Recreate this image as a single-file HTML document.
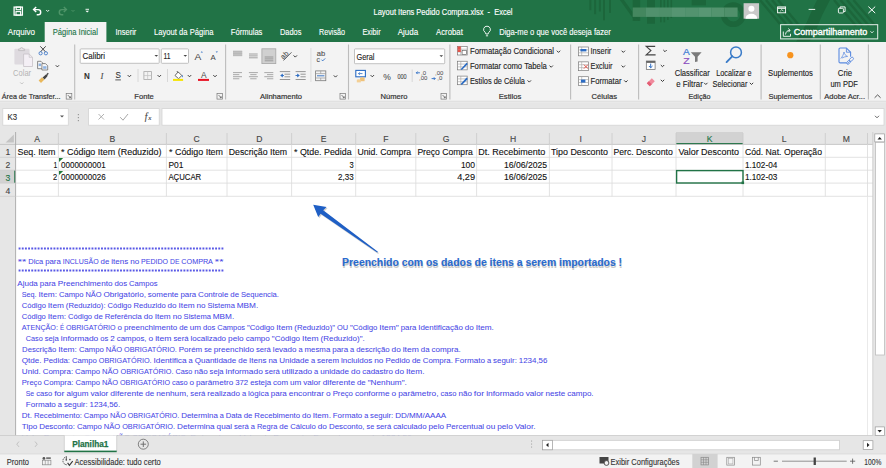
<!DOCTYPE html>
<html><head><meta charset="utf-8"><style>
html,body{margin:0;padding:0;width:886px;height:468px;overflow:hidden;background:#fff}
svg{display:block}
text{font-family:"Liberation Sans",sans-serif;white-space:pre}
.m{font-family:"Liberation Mono",monospace}
</style></head><body>
<svg width="886" height="468" viewBox="0 0 886 468">
<rect x="0" y="0" width="886" height="42" fill="#217346" />
<clipPath id="tb"><rect x="0" y="0" width="886" height="41.5"/></clipPath>
<g clip-path="url(#tb)">
<rect x="589.4" y="0" width="2" height="10.2" fill="#1c663b" />
<rect x="594.1" y="0" width="2" height="14.2" fill="#1c663b" />
<rect x="598.9" y="0" width="2" height="11.5" fill="#1c663b" />
<rect x="603" y="0" width="2" height="20.3" fill="#1c663b" />
<rect x="609" y="0" width="2" height="12.9" fill="#1c663b" />
<rect x="632.7" y="0" width="7.5" height="21" fill="#1c663b" />
<rect x="647" y="0" width="8" height="23.7" fill="#1c663b" />
<rect x="660" y="0" width="1.6" height="22.3" fill="#1c663b" />
<rect x="663.5" y="0" width="1.6" height="22.3" fill="#1c663b" />
<rect x="667" y="0" width="1.6" height="20" fill="#1c663b" />
<rect x="670.5" y="0" width="1.6" height="18" fill="#1c663b" />
<path d="M619.9 0h4l15 21h-4z" fill="#1c663b" />
<rect x="691.7" y="0" width="14.3" height="5.4" fill="#1c663b" />
<circle cx="733.3" cy="14.7" r="9.6" fill="none" stroke="#1c663b" stroke-width="5.6"/>
<path d="M817 0H830Q822 14 816 30Q812 38 809 42H796Q801 34 806 24Q811 12 817 0Z" fill="#1c663b" />
<path d="M760 0l20 24" fill="none" stroke="#1c663b" stroke-width="2.4" />
<path d="M766 0l20 24" fill="none" stroke="#1c663b" stroke-width="2.4" />
<path d="M772 0l20 24" fill="none" stroke="#1c663b" stroke-width="2.4" />
<path d="M778 0l20 24" fill="none" stroke="#1c663b" stroke-width="2.4" />
<path d="M834.0 0l22 26" fill="none" stroke="#1c663b" stroke-width="2.4" />
<path d="M840.5 0l22 26" fill="none" stroke="#1c663b" stroke-width="2.4" />
<path d="M847.0 0l22 26" fill="none" stroke="#1c663b" stroke-width="2.4" />
<path d="M853.5 0l22 26" fill="none" stroke="#1c663b" stroke-width="2.4" />
</g>
<rect x="14.1" y="7.1" width="8.3" height="8" fill="none" stroke="#ffffff" stroke-width="1.3" />
<rect x="16.2" y="7.1" width="4.3" height="2.6" fill="none" stroke="#ffffff" stroke-width="1.1" />
<rect x="16.0" y="11.6" width="4.6" height="3.5" fill="none" stroke="#ffffff" stroke-width="1.1" />
<path d="M33.8 9.6h4.3a2.6 2.6 0 0 1 0 5.2h-1.4" fill="none" stroke="#ffffff" stroke-width="1.45" />
<path d="M36.2 7.1l-2.6 2.5 2.6 2.5" fill="none" stroke="#ffffff" stroke-width="1.45" />
<path d="M46.2 10l1.5 1.5 1.5-1.5" fill="none" stroke="#ffffff" stroke-width="0.9" />
<path d="M66.2 9.6h-4.3a2.6 2.6 0 0 0 0 5.2h1.4" fill="none" stroke="#4f9569" stroke-width="1.45" />
<path d="M63.8 7.1l2.6 2.5-2.6 2.5" fill="none" stroke="#4f9569" stroke-width="1.45" />
<path d="M71.5 10l1.5 1.5 1.5-1.5" fill="none" stroke="#4f9569" stroke-width="0.9" />
<line x1="85.5" y1="9.3" x2="89" y2="9.3" stroke="#ffffff" stroke-width="0.9" />
<path d="M85.4 10.8l1.85 1.8 1.85-1.8z" fill="#ffffff" />
<text x="373.5" y="14.8" font-size="9.0" fill="#ffffff" text-anchor="start" font-weight="normal" textLength="139" lengthAdjust="spacingAndGlyphs" stroke="#ffffff" stroke-width="0.15" >Layout Itens Pedido Compra.xlsx  -  Excel</text>
<rect x="632.7" y="7.5" width="13.2" height="9.4" fill="#44875f" />
<rect x="645.8000000000001" y="7.5" width="13.2" height="9.4" fill="#51916d" />
<rect x="658.9000000000001" y="7.5" width="13.2" height="9.4" fill="#4e8f6a" />
<rect x="672.0" y="7.5" width="13.2" height="9.4" fill="#569572" />
<rect x="685.1" y="7.5" width="13.2" height="9.4" fill="#53936f" />
<rect x="698.2" y="7.5" width="13.2" height="9.4" fill="#589774" />
<rect x="711.3000000000001" y="7.5" width="13.2" height="9.4" fill="#54946f" />
<rect x="724.4000000000001" y="7.5" width="13.2" height="9.4" fill="#50906b" />
<rect x="743.6" y="3.2" width="15.5" height="15.5" fill="#c9c9c9" />
<circle cx="751.4" cy="8.8" r="3" fill="#fff"/>
<path d="M745.5 18.7a5.9 5 0 0 1 11.8 0z" fill="#fff" />
<rect x="777.6" y="6.9" width="8" height="5.9" fill="none" stroke="#ffffff" stroke-width="0.9" />
<line x1="777.6" y1="8.2" x2="785.6" y2="8.2" stroke="#ffffff" stroke-width="1.2" />
<path d="M780.2 11.2l1.6-1.6 1.6 1.6" fill="none" stroke="#ffffff" stroke-width="0.8" />
<line x1="808.6" y1="9.4" x2="815.2" y2="9.4" stroke="#ffffff" stroke-width="0.9" />
<rect x="838.4" y="8.3" width="5" height="4.7" fill="none" stroke="#ffffff" stroke-width="0.9" rx="0.8"/>
<path d="M840.1 8.3v-1.4h5v4.7h-1.6" fill="none" stroke="#ffffff" stroke-width="0.9" />
<path d="M868.4 6.6l6.8 6.5M875.2 6.6l-6.8 6.5" fill="none" stroke="#ffffff" stroke-width="1" />
<rect x="44.7" y="22" width="61.7" height="20" fill="#f3f3f3" />
<text x="7.8" y="34.6" font-size="8.8" fill="#ffffff" text-anchor="start" font-weight="normal" textLength="27.2" lengthAdjust="spacingAndGlyphs" stroke="#ffffff" stroke-width="0.12" >Arquivo</text>
<text x="52.7" y="34.6" font-size="8.8" fill="#217346" text-anchor="start" font-weight="normal" textLength="45.3" lengthAdjust="spacingAndGlyphs" stroke="#217346" stroke-width="0.12" >Página Inicial</text>
<text x="115.5" y="34.6" font-size="8.8" fill="#ffffff" text-anchor="start" font-weight="normal" textLength="20.8" lengthAdjust="spacingAndGlyphs" stroke="#ffffff" stroke-width="0.12" >Inserir</text>
<text x="154" y="34.6" font-size="8.8" fill="#ffffff" text-anchor="start" font-weight="normal" textLength="59.4" lengthAdjust="spacingAndGlyphs" stroke="#ffffff" stroke-width="0.12" >Layout da Página</text>
<text x="230.8" y="34.6" font-size="8.8" fill="#ffffff" text-anchor="start" font-weight="normal" textLength="31.6" lengthAdjust="spacingAndGlyphs" stroke="#ffffff" stroke-width="0.12" >Fórmulas</text>
<text x="280" y="34.6" font-size="8.8" fill="#ffffff" text-anchor="start" font-weight="normal" textLength="21.4" lengthAdjust="spacingAndGlyphs" stroke="#ffffff" stroke-width="0.12" >Dados</text>
<text x="319" y="34.6" font-size="8.8" fill="#ffffff" text-anchor="start" font-weight="normal" textLength="26" lengthAdjust="spacingAndGlyphs" stroke="#ffffff" stroke-width="0.12" >Revisão</text>
<text x="362.4" y="34.6" font-size="8.8" fill="#ffffff" text-anchor="start" font-weight="normal" textLength="18.2" lengthAdjust="spacingAndGlyphs" stroke="#ffffff" stroke-width="0.12" >Exibir</text>
<text x="397.7" y="34.6" font-size="8.8" fill="#ffffff" text-anchor="start" font-weight="normal" textLength="20.5" lengthAdjust="spacingAndGlyphs" stroke="#ffffff" stroke-width="0.12" >Ajuda</text>
<text x="436" y="34.6" font-size="8.8" fill="#ffffff" text-anchor="start" font-weight="normal" textLength="26.8" lengthAdjust="spacingAndGlyphs" stroke="#ffffff" stroke-width="0.12" >Acrobat</text>
<path d="M487 26.2a3.3 3.3 0 0 0-2 6c.6.5.8 1 .8 1.8h2.4c0-.8.2-1.3.8-1.8a3.3 3.3 0 0 0-2-6z" fill="none" stroke="#ffffff" stroke-width="0.9" />
<line x1="485.9" y1="35.8" x2="488.1" y2="35.8" stroke="#ffffff" stroke-width="0.9" />
<text x="499.2" y="34.6" font-size="8.8" fill="#ffffff" text-anchor="start" font-weight="normal" textLength="111.6" lengthAdjust="spacingAndGlyphs" stroke="#ffffff" stroke-width="0.12" >Diga-me o que você deseja fazer</text>
<rect x="780.6" y="24.7" width="97.1" height="14.2" fill="none" stroke="#e8f0eb" stroke-width="1" />
<path d="M783.3 31.5v4.8h7.2v-2.5" fill="none" stroke="#ffffff" stroke-width="0.9" />
<path d="M785.5 34.5c0.3-2.6 1.8-4 4.3-4.2M788.3 28.6l1.8 1.7-1.6 1.9" fill="none" stroke="#ffffff" stroke-width="0.9" />
<text x="793.7" y="34.9" font-size="8.8" fill="#ffffff" text-anchor="start" font-weight="normal" textLength="73.6" lengthAdjust="spacingAndGlyphs" stroke="#ffffff" stroke-width="0.35" >Compartilhamento</text>
<path d="M870.5 31.3l1.5 1.5 1.5-1.5" fill="none" stroke="#ffffff" stroke-width="0.9" />
<rect x="0" y="42" width="886" height="59" fill="#f3f3f3" />
<rect x="0" y="100.7" width="886" height="2" fill="#e1e1e1" />
<line x1="74.7" y1="44.5" x2="74.7" y2="99.5" stroke="#bcbcbc" stroke-width="1.1" />
<line x1="225.6" y1="44.5" x2="225.6" y2="99.5" stroke="#bcbcbc" stroke-width="1.1" />
<line x1="348.5" y1="44.5" x2="348.5" y2="99.5" stroke="#bcbcbc" stroke-width="1.1" />
<line x1="449.9" y1="44.5" x2="449.9" y2="99.5" stroke="#bcbcbc" stroke-width="1.1" />
<line x1="570.6" y1="44.5" x2="570.6" y2="99.5" stroke="#bcbcbc" stroke-width="1.1" />
<line x1="638.6" y1="44.5" x2="638.6" y2="99.5" stroke="#bcbcbc" stroke-width="1.1" />
<line x1="761.1" y1="44.5" x2="761.1" y2="99.5" stroke="#bcbcbc" stroke-width="1.1" />
<line x1="820.3" y1="44.5" x2="820.3" y2="99.5" stroke="#bcbcbc" stroke-width="1.1" />
<line x1="868.4" y1="44.5" x2="868.4" y2="99.5" stroke="#bcbcbc" stroke-width="1.1" />
<text x="1.8" y="98.9" font-size="8.0" fill="#333" text-anchor="start" font-weight="normal" textLength="58.7" lengthAdjust="spacingAndGlyphs" stroke="#333" stroke-width="0.2" >Área de Transfer...</text>
<text x="144" y="98.9" font-size="8.0" fill="#333" text-anchor="middle" font-weight="normal" textLength="19.5" lengthAdjust="spacingAndGlyphs" stroke="#333" stroke-width="0.2" >Fonte</text>
<text x="281" y="98.9" font-size="8.0" fill="#333" text-anchor="middle" font-weight="normal" textLength="42" lengthAdjust="spacingAndGlyphs" stroke="#333" stroke-width="0.2" >Alinhamento</text>
<text x="394" y="98.9" font-size="8.0" fill="#333" text-anchor="middle" font-weight="normal" textLength="27" lengthAdjust="spacingAndGlyphs" stroke="#333" stroke-width="0.2" >Número</text>
<text x="510" y="98.9" font-size="8.0" fill="#333" text-anchor="middle" font-weight="normal" textLength="22.5" lengthAdjust="spacingAndGlyphs" stroke="#333" stroke-width="0.2" >Estilos</text>
<text x="604.3" y="98.9" font-size="8.0" fill="#333" text-anchor="middle" font-weight="normal" textLength="25.5" lengthAdjust="spacingAndGlyphs" stroke="#333" stroke-width="0.2" >Células</text>
<text x="699.5" y="98.9" font-size="8.0" fill="#333" text-anchor="middle" font-weight="normal" textLength="22" lengthAdjust="spacingAndGlyphs" stroke="#333" stroke-width="0.2" >Edição</text>
<text x="790.4" y="98.9" font-size="8.0" fill="#333" text-anchor="middle" font-weight="normal" textLength="44" lengthAdjust="spacingAndGlyphs" stroke="#333" stroke-width="0.2" >Suplementos</text>
<text x="844.6" y="98.9" font-size="8.0" fill="#333" text-anchor="middle" font-weight="normal" textLength="40.8" lengthAdjust="spacingAndGlyphs" stroke="#333" stroke-width="0.2" >Adobe Acr...</text>
<rect x="66.2" y="93.5" width="5.6" height="5.6" fill="none" stroke="#777" stroke-width="0.7" />
<path d="M67.8 95.1l2.6 2.6M70.4 96.39999999999999v1.3h-1.3" fill="none" stroke="#555" stroke-width="0.8" />
<rect x="217.0" y="93.5" width="5.6" height="5.6" fill="none" stroke="#777" stroke-width="0.7" />
<path d="M218.60000000000002 95.1l2.6 2.6M221.20000000000002 96.39999999999999v1.3h-1.3" fill="none" stroke="#555" stroke-width="0.8" />
<rect x="340.0" y="93.5" width="5.6" height="5.6" fill="none" stroke="#777" stroke-width="0.7" />
<path d="M341.6 95.1l2.6 2.6M344.2 96.39999999999999v1.3h-1.3" fill="none" stroke="#555" stroke-width="0.8" />
<rect x="441.0" y="93.5" width="5.6" height="5.6" fill="none" stroke="#777" stroke-width="0.7" />
<path d="M442.6 95.1l2.6 2.6M445.2 96.39999999999999v1.3h-1.3" fill="none" stroke="#555" stroke-width="0.8" />
<path d="M874.6 97.8l3-2.9 3 2.9" fill="none" stroke="#444" stroke-width="0.9" />
<rect x="14.4" y="48.7" width="15.1" height="15.9" fill="#dedadf" rx="1"/>
<path d="M18.6 50.6v-1.6h1.6a1.4 1.4 0 0 1 2.8 0h1.6v1.6z" fill="#e6e3e6" stroke="#bdb9bd" stroke-width="0.8" />
<path d="M23.6 54h5.6l3.3 3.3v9.2h-8.9z" fill="#f4eff5" stroke="#c6c2c6" stroke-width="0.8" />
<path d="M29.2 54v3.3h3.3" fill="none" stroke="#c6c2c6" stroke-width="0.7" />
<text x="22.1" y="75.8" font-size="8.4" fill="#b4b4b4" text-anchor="middle" font-weight="normal" textLength="18" lengthAdjust="spacingAndGlyphs" >Colar</text>
<path d="M20.2 82.4l1.6 1.6 1.6-1.6" fill="none" stroke="#b8b8b8" stroke-width="0.8" />
<path d="M40.3 46.3l5.2 5.6M45.7 46.3l-5.2 5.6" fill="none" stroke="#444" stroke-width="1" />
<circle cx="40.6" cy="53.3" r="1.6" fill="none" stroke="#3f78c8" stroke-width="0.9"/>
<circle cx="45.9" cy="53.3" r="1.6" fill="none" stroke="#3f78c8" stroke-width="0.9"/>
<path d="M37.6 61.3h3.4l1.8 1.8v5.6h-5.2z" fill="#f7f7f7" stroke="#666" stroke-width="0.75" />
<path d="M41.9 63.6h3.6l2.2 2.2v4.2h-5.8z" fill="#f7f7f7" stroke="#666" stroke-width="0.75" />
<rect x="38.6" y="63.5" width="2.4" height="2.6" fill="#8fb4e3" />
<rect x="43.1" y="66.2" width="3.4" height="2.6" fill="#8fb4e3" />
<path d="M55.8 65.3l1.6 1.6 1.6-1.6" fill="none" stroke="#333" stroke-width="1" />
<path d="M38.6 80.6l3.4-3.4 2.4 2.4-3.4 3.4z" fill="#e9b85c" />
<path d="M42.6 77.4l3.6-3.2 1.6 1.6-3.2 3.6z" fill="#444" />
<line x1="46.8" y1="74.8" x2="48.3" y2="73.3" stroke="#444" stroke-width="1.3" />
<rect x="80.2" y="48.9" width="79" height="14.4" fill="#fff" stroke="#b3b3b3" stroke-width="0.8" rx="0.8"/>
<text x="82.5" y="59.2" font-size="8.4" fill="#222" text-anchor="start" font-weight="normal" textLength="22.5" lengthAdjust="spacingAndGlyphs" stroke="#222" stroke-width="0.12" >Calibri</text>
<path d="M154.5 55l1.8 1.8 1.8-1.8z" fill="#444" />
<rect x="161.3" y="48.9" width="27.2" height="14.4" fill="#fff" stroke="#b3b3b3" stroke-width="0.8" rx="0.8"/>
<text x="163.5" y="59.2" font-size="8.4" fill="#222" text-anchor="start" font-weight="normal" textLength="7" lengthAdjust="spacingAndGlyphs" stroke="#222" stroke-width="0.12" >11</text>
<path d="M183.5 55l1.8 1.8 1.8-1.8z" fill="#444" />
<text x="198" y="60.3" font-size="9.2" fill="#444" text-anchor="middle" font-weight="normal" textLength="6.8" lengthAdjust="spacingAndGlyphs" >A</text>
<path d="M200.6 52.6l1.2-1.3 1.2 1.3z" fill="#2b6cc4" />
<text x="213.2" y="60.3" font-size="7.2" fill="#444" text-anchor="middle" font-weight="normal" textLength="5.2" lengthAdjust="spacingAndGlyphs" >A</text>
<path d="M215.6 51.5l1.2 1.3 1.2-1.3z" fill="#2b6cc4" />
<text x="87" y="78.8" font-size="8.2" fill="#333" text-anchor="middle" font-weight="bold" textLength="5.8" lengthAdjust="spacingAndGlyphs" stroke="#333" stroke-width="0.05" >N</text>
<text x="101.9" y="78.8" font-size="8.8" fill="#444" text-anchor="middle" font-weight="normal" stroke="#444" stroke-width="0.05" style="font-family:&quot;Liberation Serif&quot;,serif;font-style:italic">I</text>
<text x="118.1" y="78.2" font-size="8.2" fill="#333" text-anchor="middle" font-weight="normal" textLength="5.4" lengthAdjust="spacingAndGlyphs" stroke="#333" stroke-width="0.1" >S</text>
<line x1="115.3" y1="79.9" x2="120.9" y2="79.9" stroke="#333" stroke-width="0.8" />
<path d="M127.7 75.10000000000001l1.7 1.7 1.7-1.7" fill="none" stroke="#3a3a3a" stroke-width="1.0" />
<line x1="138" y1="69" x2="138" y2="82" stroke="#d0d0d0" stroke-width="0.8" />
<rect x="143.9" y="71.6" width="7.5" height="7.9" fill="none" stroke="#a8a8a8" stroke-width="0.8" />
<line x1="147.65" y1="71.6" x2="147.65" y2="79.5" stroke="#c0c0c0" stroke-width="0.7" />
<line x1="143.9" y1="75.55" x2="151.4" y2="75.55" stroke="#c0c0c0" stroke-width="0.7" />
<path d="M157.60000000000002 75.10000000000001l1.7 1.7 1.7-1.7" fill="none" stroke="#3a3a3a" stroke-width="1.0" />
<line x1="167.5" y1="69" x2="167.5" y2="82" stroke="#d0d0d0" stroke-width="0.8" />
<path d="M175 75.5l3.2-3.6 3.6 3.6-3.2 3.2z" fill="#fff" stroke="#444" stroke-width="0.8" />
<line x1="176.8" y1="71" x2="178.2" y2="72.6" stroke="#444" stroke-width="0.8" />
<path d="M182.2 74.8q1.3 1.6 0.2 2.8q-1.2-1 -0.2-2.8z" fill="#2b6cc4" />
<rect x="173" y="78.9" width="10.1" height="2" fill="#f5e400" />
<path d="M187.8 75.10000000000001l1.7 1.7 1.7-1.7" fill="none" stroke="#3a3a3a" stroke-width="1.0" />
<text x="203.9" y="78.2" font-size="8.4" fill="#444" text-anchor="middle" font-weight="normal" >A</text>
<rect x="198" y="78.9" width="11" height="2" fill="#e81123" />
<path d="M213.3 75.10000000000001l1.7 1.7 1.7-1.7" fill="none" stroke="#3a3a3a" stroke-width="1.0" />
<rect x="233" y="50.6" width="9.2" height="5.6" fill="#c4c4c4" />
<line x1="233" y1="51.6" x2="242.2" y2="51.6" stroke="#b3b3b3" stroke-width="0.7" />
<line x1="233" y1="53.4" x2="242.2" y2="53.4" stroke="#b3b3b3" stroke-width="0.7" />
<line x1="233" y1="55.2" x2="242.2" y2="55.2" stroke="#b3b3b3" stroke-width="0.7" />
<line x1="249" y1="54.0" x2="257.7" y2="54.0" stroke="#858585" stroke-width="0.75" />
<line x1="249" y1="55.9" x2="257.7" y2="55.9" stroke="#858585" stroke-width="0.75" />
<line x1="249" y1="57.8" x2="257.7" y2="57.8" stroke="#858585" stroke-width="0.75" />
<rect x="261.9" y="48.8" width="13.9" height="14.8" fill="#d0d0d0" stroke="#a6a6a6" stroke-width="0.8" />
<line x1="264.7" y1="57.0" x2="273.3" y2="57.0" stroke="#8c8c8c" stroke-width="0.8" />
<line x1="264.7" y1="58.9" x2="273.3" y2="58.9" stroke="#8c8c8c" stroke-width="0.8" />
<line x1="264.7" y1="60.8" x2="273.3" y2="60.8" stroke="#8c8c8c" stroke-width="0.8" />
<text x="284.3" y="57.6" font-size="7.2" fill="#555" text-anchor="middle" font-weight="normal" stroke="#555" stroke-width="0.12" transform="rotate(-45 284.3 55)">ab</text>
<line x1="283.5" y1="60.5" x2="291.5" y2="52.3" stroke="#555" stroke-width="0.9" />
<path d="M293.6 55.400000000000006l1.7 1.7 1.7-1.7" fill="none" stroke="#3a3a3a" stroke-width="1.0" />
<text x="321" y="55.6" font-size="6.8" fill="#555" text-anchor="middle" font-weight="normal" textLength="8.4" lengthAdjust="spacingAndGlyphs" stroke="#555" stroke-width="0.12" >ab</text>
<text x="318.3" y="61.8" font-size="6.8" fill="#555" text-anchor="middle" font-weight="normal" stroke="#555" stroke-width="0.12" >c</text>
<path d="M321.5 59.7l1.2 1.2 2.5-2.5" fill="none" stroke="#2b6cc4" stroke-width="0.9" />
<line x1="233" y1="72.6" x2="242" y2="72.6" stroke="#a4a4a4" stroke-width="0.95" />
<line x1="233" y1="74.64999999999999" x2="239.3" y2="74.64999999999999" stroke="#a4a4a4" stroke-width="0.95" />
<line x1="233" y1="76.69999999999999" x2="242" y2="76.69999999999999" stroke="#a4a4a4" stroke-width="0.95" />
<line x1="233" y1="78.75" x2="239.3" y2="78.75" stroke="#a4a4a4" stroke-width="0.95" />
<line x1="248.9" y1="72.6" x2="257.9" y2="72.6" stroke="#a4a4a4" stroke-width="0.95" />
<line x1="250.25" y1="74.64999999999999" x2="256.55" y2="74.64999999999999" stroke="#a4a4a4" stroke-width="0.95" />
<line x1="248.9" y1="76.69999999999999" x2="257.9" y2="76.69999999999999" stroke="#a4a4a4" stroke-width="0.95" />
<line x1="250.25" y1="78.75" x2="256.55" y2="78.75" stroke="#a4a4a4" stroke-width="0.95" />
<line x1="264.3" y1="72.6" x2="273.3" y2="72.6" stroke="#a4a4a4" stroke-width="0.95" />
<line x1="267.0" y1="74.64999999999999" x2="273.3" y2="74.64999999999999" stroke="#a4a4a4" stroke-width="0.95" />
<line x1="264.3" y1="76.69999999999999" x2="273.3" y2="76.69999999999999" stroke="#a4a4a4" stroke-width="0.95" />
<line x1="267.0" y1="78.75" x2="273.3" y2="78.75" stroke="#a4a4a4" stroke-width="0.95" />
<line x1="279.8" y1="71.6" x2="290.2" y2="71.6" stroke="#7d7d7d" stroke-width="0.8" />
<line x1="284.5" y1="74.2" x2="290.2" y2="74.2" stroke="#7d7d7d" stroke-width="0.8" />
<line x1="284.5" y1="76.8" x2="290.2" y2="76.8" stroke="#7d7d7d" stroke-width="0.8" />
<line x1="279.8" y1="79.5" x2="290.2" y2="79.5" stroke="#7d7d7d" stroke-width="0.8" />
<path d="M280.2 75.5l2.6-2v4z" fill="#2b6cc4" />
<line x1="282" y1="75.5" x2="284" y2="75.5" stroke="#2b6cc4" stroke-width="0.9" />
<line x1="295.6" y1="71.6" x2="305.7" y2="71.6" stroke="#7d7d7d" stroke-width="0.8" />
<line x1="300.5" y1="74.2" x2="305.7" y2="74.2" stroke="#7d7d7d" stroke-width="0.8" />
<line x1="300.5" y1="76.8" x2="305.7" y2="76.8" stroke="#7d7d7d" stroke-width="0.8" />
<line x1="295.6" y1="79.5" x2="305.7" y2="79.5" stroke="#7d7d7d" stroke-width="0.8" />
<path d="M299.8 75.5l-2.6-2v4z" fill="#2b6cc4" />
<line x1="295.5" y1="75.5" x2="298" y2="75.5" stroke="#2b6cc4" stroke-width="0.9" />
<line x1="310.9" y1="48" x2="310.9" y2="82" stroke="#d8d8d8" stroke-width="0.8" />
<rect x="315.6" y="70.9" width="10.2" height="9.8" fill="none" stroke="#7a7a7a" stroke-width="0.8" />
<line x1="315.6" y1="73.6" x2="325.8" y2="73.6" stroke="#9a9a9a" stroke-width="0.7" />
<line x1="315.6" y1="78" x2="325.8" y2="78" stroke="#9a9a9a" stroke-width="0.7" />
<line x1="320.7" y1="70.9" x2="320.7" y2="73.6" stroke="#9a9a9a" stroke-width="0.7" />
<line x1="320.7" y1="78" x2="320.7" y2="80.7" stroke="#9a9a9a" stroke-width="0.7" />
<line x1="317" y1="75.8" x2="324.4" y2="75.8" stroke="#2b6cc4" stroke-width="0.9" />
<path d="M333.8 75.4l1.7 1.7 1.7-1.7" fill="none" stroke="#3a3a3a" stroke-width="1.0" />
<rect x="354.5" y="48.9" width="90.2" height="14.8" fill="#fff" stroke="#b3b3b3" stroke-width="0.8" rx="0.8"/>
<text x="356.5" y="59.5" font-size="8.4" fill="#222" text-anchor="start" font-weight="normal" textLength="18" lengthAdjust="spacingAndGlyphs" stroke="#222" stroke-width="0.12" >Geral</text>
<path d="M439.5 55.3l1.8 1.8 1.8-1.8z" fill="#444" />
<rect x="355.8" y="70.4" width="9.6" height="6.4" fill="#fff" stroke="#2b6cc4" stroke-width="1.1" />
<path d="M358.5 73.6h4M359.8 72.3l-1.3 1.3 1.3 1.3" fill="none" stroke="#2b6cc4" stroke-width="0.8" />
<ellipse cx="362.3" cy="78.2" rx="2.3" ry="0.9" fill="#f0c27a"/>
<rect x="360" y="78.2" width="4.6" height="3" fill="#f0c27a" />
<ellipse cx="358.8" cy="80" rx="2" ry="0.8" fill="#f3cf95"/>
<rect x="356.8" y="80" width="4" height="2.4" fill="#f3cf95" />
<path d="M370.6 75.10000000000001l1.7 1.7 1.7-1.7" fill="none" stroke="#3a3a3a" stroke-width="1.0" />
<text x="387" y="79.6" font-size="9.6" fill="#444" text-anchor="middle" font-weight="normal" textLength="7.6" lengthAdjust="spacingAndGlyphs" stroke="#444" stroke-width="0.05" >%</text>
<text x="402" y="78.6" font-size="6.6" fill="#444" text-anchor="middle" font-weight="normal" textLength="9.2" lengthAdjust="spacingAndGlyphs" stroke="#444" stroke-width="0.1" >000</text>
<line x1="412.2" y1="69.5" x2="412.2" y2="82" stroke="#d0d0d0" stroke-width="0.8" />
<text x="423.6" y="74.6" font-size="6" fill="#555" text-anchor="middle" font-weight="normal" stroke="#555" stroke-width="0.05" >,0</text>
<text x="423.2" y="80.4" font-size="6" fill="#555" text-anchor="middle" font-weight="normal" stroke="#555" stroke-width="0.05" >,00</text>
<path d="M416.3 72.8h3.6M417.6 71.5l-1.3 1.3 1.3 1.3" fill="none" stroke="#2b6cc4" stroke-width="0.9" />
<text x="439.2" y="74.6" font-size="6" fill="#555" text-anchor="middle" font-weight="normal" stroke="#555" stroke-width="0.05" >,00</text>
<text x="439.8" y="80.4" font-size="6" fill="#555" text-anchor="middle" font-weight="normal" stroke="#555" stroke-width="0.05" >,0</text>
<path d="M431.6 78.6h3.6M433.9 77.3l1.3 1.3-1.3 1.3" fill="none" stroke="#2b6cc4" stroke-width="0.9" />
<rect x="457.6" y="46.4" width="9.6" height="8.6" fill="#fff" stroke="#7a7a7a" stroke-width="0.7" />
<line x1="457.6" y1="49.199999999999996" x2="467.20000000000005" y2="49.199999999999996" stroke="#a0a0a0" stroke-width="0.6" />
<line x1="457.6" y1="52.0" x2="467.20000000000005" y2="52.0" stroke="#a0a0a0" stroke-width="0.6" />
<line x1="460.8" y1="46.4" x2="460.8" y2="55.0" stroke="#a0a0a0" stroke-width="0.6" />
<rect x="457.6" y="46.4" width="3.2" height="2.8" fill="#e3554a" />
<rect x="457.6" y="49.199999999999996" width="3.2" height="2.8" fill="#e3554a" />
<rect x="462.1" y="50.6" width="4.5" height="4" fill="#fff" stroke="#555" stroke-width="0.6" />
<text x="469.9" y="54.199999999999996" font-size="8.6" fill="#222" text-anchor="start" font-weight="normal" textLength="84.1" lengthAdjust="spacingAndGlyphs" stroke="#222" stroke-width="0.12" >Formatação Condicional</text>
<path d="M556.8 50.7l1.7 1.7 1.7-1.7" fill="none" stroke="#3a3a3a" stroke-width="1.0" />
<rect x="457.6" y="61.24999999999999" width="9.6" height="8.6" fill="#fff" stroke="#7a7a7a" stroke-width="0.7" />
<line x1="457.6" y1="64.05" x2="467.20000000000005" y2="64.05" stroke="#a0a0a0" stroke-width="0.6" />
<line x1="457.6" y1="66.85" x2="467.20000000000005" y2="66.85" stroke="#a0a0a0" stroke-width="0.6" />
<line x1="460.8" y1="61.24999999999999" x2="460.8" y2="69.85" stroke="#a0a0a0" stroke-width="0.6" />
<path d="M460.6 69.25l6-6.5 1.3 1.3-6 6z" fill="#2b6cc4" />
<text x="469.9" y="69.05" font-size="8.6" fill="#222" text-anchor="start" font-weight="normal" textLength="77" lengthAdjust="spacingAndGlyphs" stroke="#222" stroke-width="0.12" >Formatar como Tabela</text>
<path d="M549.5 65.55l1.7 1.7 1.7-1.7" fill="none" stroke="#3a3a3a" stroke-width="1.0" />
<rect x="457.6" y="76.1" width="9.6" height="8.6" fill="#fff" stroke="#7a7a7a" stroke-width="0.7" />
<line x1="457.6" y1="78.89999999999999" x2="467.20000000000005" y2="78.89999999999999" stroke="#a0a0a0" stroke-width="0.6" />
<line x1="457.6" y1="81.69999999999999" x2="467.20000000000005" y2="81.69999999999999" stroke="#a0a0a0" stroke-width="0.6" />
<line x1="460.8" y1="76.1" x2="460.8" y2="84.69999999999999" stroke="#a0a0a0" stroke-width="0.6" />
<path d="M460.6 84.1l6-6.5 1.3 1.3-6 6z" fill="#2b6cc4" />
<text x="469.9" y="83.9" font-size="8.6" fill="#222" text-anchor="start" font-weight="normal" textLength="55.1" lengthAdjust="spacingAndGlyphs" stroke="#222" stroke-width="0.12" >Estilos de Célula</text>
<path d="M527.5999999999999 80.4l1.7 1.7 1.7-1.7" fill="none" stroke="#3a3a3a" stroke-width="1.0" />
<rect x="578.4" y="47.0" width="10" height="8.8" fill="#fff" stroke="#7a7a7a" stroke-width="0.7" />
<line x1="578.4" y1="49.9" x2="588.4" y2="49.9" stroke="#a0a0a0" stroke-width="0.6" />
<line x1="578.4" y1="52.8" x2="588.4" y2="52.8" stroke="#a0a0a0" stroke-width="0.6" />
<line x1="581.6999999999999" y1="47.0" x2="581.6999999999999" y2="55.8" stroke="#a0a0a0" stroke-width="0.6" />
<rect x="580.4" y="49.0" width="6" height="2.4" fill="#2b6cc4" />
<text x="590.5" y="54.199999999999996" font-size="8.6" fill="#222" text-anchor="start" font-weight="normal" textLength="20.8" lengthAdjust="spacingAndGlyphs" stroke="#222" stroke-width="0.12" >Inserir</text>
<path d="M621.5999999999999 50.7l1.7 1.7 1.7-1.7" fill="none" stroke="#3a3a3a" stroke-width="1.0" />
<rect x="578.4" y="61.849999999999994" width="10" height="8.8" fill="#fff" stroke="#7a7a7a" stroke-width="0.7" />
<line x1="578.4" y1="64.74999999999999" x2="588.4" y2="64.74999999999999" stroke="#a0a0a0" stroke-width="0.6" />
<line x1="578.4" y1="67.64999999999999" x2="588.4" y2="67.64999999999999" stroke="#a0a0a0" stroke-width="0.6" />
<line x1="581.6999999999999" y1="61.849999999999994" x2="581.6999999999999" y2="70.64999999999999" stroke="#a0a0a0" stroke-width="0.6" />
<path d="M583.9 64.64999999999999l4 4M587.9 64.64999999999999l-4 4" fill="none" stroke="#e3554a" stroke-width="1" />
<text x="590.5" y="69.05" font-size="8.6" fill="#222" text-anchor="start" font-weight="normal" textLength="22" lengthAdjust="spacingAndGlyphs" stroke="#222" stroke-width="0.12" >Excluir</text>
<path d="M621.5999999999999 65.55l1.7 1.7 1.7-1.7" fill="none" stroke="#3a3a3a" stroke-width="1.0" />
<rect x="578.4" y="76.7" width="10" height="8.8" fill="#fff" stroke="#7a7a7a" stroke-width="0.7" />
<line x1="578.4" y1="79.6" x2="588.4" y2="79.6" stroke="#a0a0a0" stroke-width="0.6" />
<line x1="578.4" y1="82.5" x2="588.4" y2="82.5" stroke="#a0a0a0" stroke-width="0.6" />
<line x1="581.6999999999999" y1="76.7" x2="581.6999999999999" y2="85.5" stroke="#a0a0a0" stroke-width="0.6" />
<rect x="580.9" y="79.6" width="4.5" height="3" fill="#2b6cc4" />
<text x="590.5" y="83.9" font-size="8.6" fill="#222" text-anchor="start" font-weight="normal" textLength="31" lengthAdjust="spacingAndGlyphs" stroke="#222" stroke-width="0.12" >Formatar</text>
<path d="M624.1999999999999 80.4l1.7 1.7 1.7-1.7" fill="none" stroke="#3a3a3a" stroke-width="1.0" />
<path d="M655.2 46.3H646.2L650.9 50.6L646.2 54.9H655.6" fill="none" stroke="#444" stroke-width="1.15" />
<path d="M663.3 50.0l1.7 1.7 1.7-1.7" fill="none" stroke="#3a3a3a" stroke-width="1.0" />
<rect x="646.3" y="61" width="8.8" height="8.6" fill="#fff" stroke="#666" stroke-width="0.7" />
<rect x="646.3" y="61" width="8.8" height="1.9" fill="#666" />
<path d="M650.7 63.6v4M648.9 66l1.8 1.8 1.8-1.8" fill="none" stroke="#2b6cc4" stroke-width="1" />
<path d="M660.8 65.0l1.7 1.7 1.7-1.7" fill="none" stroke="#3a3a3a" stroke-width="1.0" />
<path d="M646.8 83.2l5-5 3 3-5 5z" fill="#f08a9c" />
<path d="M646.8 83.2l2-2 3 3-2 2z" fill="#e35d74" />
<path d="M660.8 79.8l1.7 1.7 1.7-1.7" fill="none" stroke="#3a3a3a" stroke-width="1.0" />
<text x="686.4" y="55" font-size="9.4" fill="#3a7bd5" text-anchor="middle" font-weight="normal" textLength="6.8" lengthAdjust="spacingAndGlyphs" stroke="#3a7bd5" stroke-width="0.2" >A</text>
<text x="686.4" y="63.9" font-size="9.4" fill="#8b4fc0" text-anchor="middle" font-weight="normal" textLength="6.4" lengthAdjust="spacingAndGlyphs" stroke="#8b4fc0" stroke-width="0.2" >Z</text>
<path d="M690.8 52.2h10.8l-4 4.6v4.8l-2.6 0.3v-5.1z" fill="#7a7a7a" />
<text x="692.2" y="76.3" font-size="8.6" fill="#222" text-anchor="middle" font-weight="normal" textLength="35" lengthAdjust="spacingAndGlyphs" stroke="#222" stroke-width="0.12" >Classificar</text>
<text x="689.5" y="86.7" font-size="8.6" fill="#222" text-anchor="middle" font-weight="normal" textLength="26.5" lengthAdjust="spacingAndGlyphs" stroke="#222" stroke-width="0.12" >e Filtrar</text>
<path d="M704.0999999999999 82.8l1.7 1.7 1.7-1.7" fill="none" stroke="#3a3a3a" stroke-width="1.0" />
<circle cx="736" cy="52.4" r="5.4" fill="none" stroke="#3a7bc8" stroke-width="1.5"/>
<path d="M732.2 56.3l-5.6 5.8" fill="none" stroke="#3a7bc8" stroke-width="1.9" stroke-linecap="round"/>
<text x="733.9" y="76.3" font-size="8.6" fill="#222" text-anchor="middle" font-weight="normal" textLength="35.3" lengthAdjust="spacingAndGlyphs" stroke="#222" stroke-width="0.12" >Localizar e</text>
<text x="730" y="86.7" font-size="8.6" fill="#222" text-anchor="middle" font-weight="normal" textLength="34.8" lengthAdjust="spacingAndGlyphs" stroke="#222" stroke-width="0.12" >Selecionar</text>
<path d="M749.8 82.8l1.7 1.7 1.7-1.7" fill="none" stroke="#3a3a3a" stroke-width="1.0" />
<circle cx="790.3" cy="55.2" r="3.1" fill="#f7931e"/>
<text x="790.5" y="76.3" font-size="8.6" fill="#222" text-anchor="middle" font-weight="normal" textLength="44.9" lengthAdjust="spacingAndGlyphs" stroke="#222" stroke-width="0.12" >Suplementos</text>
<path d="M839 49.2a1.2 1.2 0 0 1 1.2-1.2h6.2l4.2 4.2v4.6M846.6 62.9h-6.4a1.2 1.2 0 0 1-1.2-1.2v-12.5" fill="none" stroke="#5a8ae0" stroke-width="1.1" />
<path d="M846.4 48v4.2h4.2" fill="none" stroke="#5a8ae0" stroke-width="0.9" />
<path d="M840.8 58.6c1.6-2 2.8-4.2 3.2-6.6c.3 2 1.4 3.6 3.6 4.4c-2 .1-4 .7-5.6 1.6" fill="none" stroke="#5a8ae0" stroke-width="0.75" />
<path d="M847.6 63.6l2.2-2.4M849.6 59.3l1.6-1.7a1.3 1.3 0 0 1 1.9 1.8l-1.6 1.7a1.3 1.3 0 0 1 -1.9 -1.8zM847 62.1l1.3-1.4a1.3 1.3 0 0 1 1.9 1.8l-1.3 1.4a1.3 1.3 0 0 1 -1.9 -1.8z" fill="none" stroke="#5a8ae0" stroke-width="0.9" />
<text x="844.9" y="76.3" font-size="8.6" fill="#222" text-anchor="middle" font-weight="normal" textLength="14.3" lengthAdjust="spacingAndGlyphs" stroke="#222" stroke-width="0.12" >Crie</text>
<text x="844.2" y="86.7" font-size="8.6" fill="#222" text-anchor="middle" font-weight="normal" textLength="27.5" lengthAdjust="spacingAndGlyphs" stroke="#222" stroke-width="0.12" >um PDF</text>
<rect x="0" y="102.7" width="886" height="29.3" fill="#e6e6e6" />
<rect x="2.8" y="108.6" width="65.5" height="16.6" fill="#fff" stroke="#d4d4d4" stroke-width="0.8" />
<text x="7.5" y="120.2" font-size="8.6" fill="#333" text-anchor="start" font-weight="normal" textLength="9.6" lengthAdjust="spacingAndGlyphs" stroke="#333" stroke-width="0.12" >K3</text>
<path d="M60 115.6l2 2 2-2z" fill="#555" />
<rect x="77.8" y="114" width="1.2" height="1.2" fill="#999" />
<rect x="77.8" y="117" width="1.2" height="1.2" fill="#999" />
<rect x="77.8" y="120" width="1.2" height="1.2" fill="#999" />
<rect x="88.6" y="108.6" width="70.6" height="16.6" fill="#fff" stroke="#d4d4d4" stroke-width="0.8" />
<path d="M98.5 114l5.5 5.5M104 114l-5.5 5.5" fill="none" stroke="#a8a8a8" stroke-width="0.9" />
<path d="M120.2 117.2l2.8 3 5-6.2" fill="none" stroke="#a8a8a8" stroke-width="1" />
<text x="146" y="120" font-size="9.4" fill="#444" text-anchor="middle" font-weight="normal" stroke="#444" stroke-width="0.12" style="font-family:&quot;Liberation Serif&quot;,serif;font-style:italic">f</text>
<text x="149.9" y="120" font-size="7" fill="#444" text-anchor="middle" font-weight="normal" stroke="#444" stroke-width="0.12" style="font-family:&quot;Liberation Serif&quot;,serif;font-style:italic">x</text>
<rect x="162" y="108.6" width="722" height="16.6" fill="#fff" stroke="#d4d4d4" stroke-width="0.8" />
<path d="M875 115.8l2 2 2-2" fill="none" stroke="#555" stroke-width="0.9" />
<rect x="0" y="132" width="873" height="303.5" fill="#fff" />
<rect x="0" y="132" width="15.6" height="303.5" fill="#e6e6e6" />
<rect x="0" y="132" width="873" height="12.4" fill="#e6e6e6" />
<rect x="676" y="132" width="67" height="12.4" fill="#d2d2d2" />
<line x1="676" y1="143.7" x2="743" y2="143.7" stroke="#217346" stroke-width="1.3" />
<rect x="0" y="170.2" width="15.6" height="12.9" fill="#d2d2d2" />
<line x1="14.9" y1="170.2" x2="14.9" y2="183.1" stroke="#217346" stroke-width="1.3" />
<line x1="58.4" y1="133" x2="58.4" y2="144.4" stroke="#c9c9c9" stroke-width="0.8" />
<line x1="166.4" y1="133" x2="166.4" y2="144.4" stroke="#c9c9c9" stroke-width="0.8" />
<line x1="227" y1="133" x2="227" y2="144.4" stroke="#c9c9c9" stroke-width="0.8" />
<line x1="291.6" y1="133" x2="291.6" y2="144.4" stroke="#c9c9c9" stroke-width="0.8" />
<line x1="355.7" y1="133" x2="355.7" y2="144.4" stroke="#c9c9c9" stroke-width="0.8" />
<line x1="415.8" y1="133" x2="415.8" y2="144.4" stroke="#c9c9c9" stroke-width="0.8" />
<line x1="476.6" y1="133" x2="476.6" y2="144.4" stroke="#c9c9c9" stroke-width="0.8" />
<line x1="549.4" y1="133" x2="549.4" y2="144.4" stroke="#c9c9c9" stroke-width="0.8" />
<line x1="612" y1="133" x2="612" y2="144.4" stroke="#c9c9c9" stroke-width="0.8" />
<line x1="676" y1="133" x2="676" y2="144.4" stroke="#c9c9c9" stroke-width="0.8" />
<line x1="743" y1="133" x2="743" y2="144.4" stroke="#c9c9c9" stroke-width="0.8" />
<line x1="825.3" y1="133" x2="825.3" y2="144.4" stroke="#c9c9c9" stroke-width="0.8" />
<line x1="867.5" y1="133" x2="867.5" y2="144.4" stroke="#c9c9c9" stroke-width="0.8" />
<line x1="0" y1="157.3" x2="15.6" y2="157.3" stroke="#cdcdcd" stroke-width="0.8" />
<line x1="0" y1="170.2" x2="15.6" y2="170.2" stroke="#cdcdcd" stroke-width="0.8" />
<line x1="0" y1="183.1" x2="15.6" y2="183.1" stroke="#cdcdcd" stroke-width="0.8" />
<line x1="0" y1="196.3" x2="15.6" y2="196.3" stroke="#cdcdcd" stroke-width="0.8" />
<line x1="0" y1="144.4" x2="873" y2="144.4" stroke="#bdbdbd" stroke-width="0.8" />
<line x1="15.6" y1="132" x2="15.6" y2="435.5" stroke="#a8a8a8" stroke-width="0.9" />
<line x1="15.6" y1="157.3" x2="873" y2="157.3" stroke="#dadada" stroke-width="0.8" />
<line x1="15.6" y1="170.2" x2="873" y2="170.2" stroke="#dadada" stroke-width="0.8" />
<line x1="15.6" y1="183.1" x2="873" y2="183.1" stroke="#dadada" stroke-width="0.8" />
<line x1="15.6" y1="196.3" x2="873" y2="196.3" stroke="#dadada" stroke-width="0.8" />
<line x1="58.4" y1="144.4" x2="58.4" y2="196.3" stroke="#dadada" stroke-width="0.8" />
<line x1="166.4" y1="144.4" x2="166.4" y2="196.3" stroke="#dadada" stroke-width="0.8" />
<line x1="227" y1="144.4" x2="227" y2="196.3" stroke="#dadada" stroke-width="0.8" />
<line x1="291.6" y1="144.4" x2="291.6" y2="196.3" stroke="#dadada" stroke-width="0.8" />
<line x1="355.7" y1="144.4" x2="355.7" y2="196.3" stroke="#dadada" stroke-width="0.8" />
<line x1="415.8" y1="144.4" x2="415.8" y2="196.3" stroke="#dadada" stroke-width="0.8" />
<line x1="476.6" y1="144.4" x2="476.6" y2="196.3" stroke="#dadada" stroke-width="0.8" />
<line x1="549.4" y1="144.4" x2="549.4" y2="196.3" stroke="#dadada" stroke-width="0.8" />
<line x1="612" y1="144.4" x2="612" y2="196.3" stroke="#dadada" stroke-width="0.8" />
<line x1="676" y1="144.4" x2="676" y2="196.3" stroke="#dadada" stroke-width="0.8" />
<line x1="743" y1="144.4" x2="743" y2="196.3" stroke="#dadada" stroke-width="0.8" />
<line x1="825.3" y1="144.4" x2="825.3" y2="196.3" stroke="#dadada" stroke-width="0.8" />
<line x1="867.5" y1="144.4" x2="867.5" y2="196.3" stroke="#dadada" stroke-width="0.8" />
<line x1="867.5" y1="196.3" x2="867.5" y2="435.5" stroke="#e4e4e4" stroke-width="0.8" />
<path d="M5.6 142.6h8.3v-8z" fill="#c4c4c4" />
<text x="37.0" y="141.6" font-size="8.6" fill="#444" text-anchor="middle" font-weight="normal" stroke="#444" stroke-width="0.12" >A</text>
<text x="112.4" y="141.6" font-size="8.6" fill="#444" text-anchor="middle" font-weight="normal" stroke="#444" stroke-width="0.12" >B</text>
<text x="196.7" y="141.6" font-size="8.6" fill="#444" text-anchor="middle" font-weight="normal" stroke="#444" stroke-width="0.12" >C</text>
<text x="259.3" y="141.6" font-size="8.6" fill="#444" text-anchor="middle" font-weight="normal" stroke="#444" stroke-width="0.12" >D</text>
<text x="323.65" y="141.6" font-size="8.6" fill="#444" text-anchor="middle" font-weight="normal" stroke="#444" stroke-width="0.12" >E</text>
<text x="385.75" y="141.6" font-size="8.6" fill="#444" text-anchor="middle" font-weight="normal" stroke="#444" stroke-width="0.12" >F</text>
<text x="446.20000000000005" y="141.6" font-size="8.6" fill="#444" text-anchor="middle" font-weight="normal" stroke="#444" stroke-width="0.12" >G</text>
<text x="513.0" y="141.6" font-size="8.6" fill="#444" text-anchor="middle" font-weight="normal" stroke="#444" stroke-width="0.12" >H</text>
<text x="580.7" y="141.6" font-size="8.6" fill="#444" text-anchor="middle" font-weight="normal" stroke="#444" stroke-width="0.12" >I</text>
<text x="644.0" y="141.6" font-size="8.6" fill="#444" text-anchor="middle" font-weight="normal" stroke="#444" stroke-width="0.12" >J</text>
<text x="709.5" y="141.6" font-size="8.6" fill="#217346" text-anchor="middle" font-weight="normal" stroke="#217346" stroke-width="0.12" >K</text>
<text x="784.15" y="141.6" font-size="8.6" fill="#444" text-anchor="middle" font-weight="normal" stroke="#444" stroke-width="0.12" >L</text>
<text x="846.4" y="141.6" font-size="8.6" fill="#444" text-anchor="middle" font-weight="normal" stroke="#444" stroke-width="0.12" >M</text>
<text x="8" y="155.0" font-size="8.6" fill="#444" text-anchor="middle" font-weight="normal" stroke="#444" stroke-width="0.12" >1</text>
<text x="8" y="167.9" font-size="8.6" fill="#444" text-anchor="middle" font-weight="normal" stroke="#444" stroke-width="0.12" >2</text>
<text x="8" y="180.79999999999998" font-size="8.6" fill="#217346" text-anchor="middle" font-weight="normal" stroke="#217346" stroke-width="0.12" >3</text>
<text x="8" y="193.7" font-size="8.6" fill="#444" text-anchor="middle" font-weight="normal" stroke="#444" stroke-width="0.12" >4</text>
<text x="17.5" y="155" font-size="9.2" fill="#111" text-anchor="start" font-weight="normal" textLength="38" lengthAdjust="spacingAndGlyphs" stroke="#111" stroke-width="0.12" >Seq. Item</text>
<text x="61" y="155" font-size="9.2" fill="#111" text-anchor="start" font-weight="normal" textLength="100.5" lengthAdjust="spacingAndGlyphs" stroke="#111" stroke-width="0.12" >* Código Item (Reduzido)</text>
<text x="169" y="155" font-size="9.2" fill="#111" text-anchor="start" font-weight="normal" textLength="54" lengthAdjust="spacingAndGlyphs" stroke="#111" stroke-width="0.12" >* Código Item</text>
<text x="228.7" y="155" font-size="9.2" fill="#111" text-anchor="start" font-weight="normal" textLength="58.4" lengthAdjust="spacingAndGlyphs" stroke="#111" stroke-width="0.12" >Descrição Item</text>
<text x="294" y="155" font-size="9.2" fill="#111" text-anchor="start" font-weight="normal" textLength="57.6" lengthAdjust="spacingAndGlyphs" stroke="#111" stroke-width="0.12" >* Qtde. Pedida</text>
<text x="357.4" y="155" font-size="9.2" fill="#111" text-anchor="start" font-weight="normal" textLength="53.8" lengthAdjust="spacingAndGlyphs" stroke="#111" stroke-width="0.12" >Unid. Compra</text>
<text x="417.4" y="155" font-size="9.2" fill="#111" text-anchor="start" font-weight="normal" textLength="55.4" lengthAdjust="spacingAndGlyphs" stroke="#111" stroke-width="0.12" >Preço Compra</text>
<text x="478.3" y="155" font-size="9.2" fill="#111" text-anchor="start" font-weight="normal" textLength="67" lengthAdjust="spacingAndGlyphs" stroke="#111" stroke-width="0.12" >Dt. Recebimento</text>
<text x="551" y="155" font-size="9.2" fill="#111" text-anchor="start" font-weight="normal" textLength="56.9" lengthAdjust="spacingAndGlyphs" stroke="#111" stroke-width="0.12" >Tipo Desconto</text>
<text x="613.5" y="155" font-size="9.2" fill="#111" text-anchor="start" font-weight="normal" textLength="59.2" lengthAdjust="spacingAndGlyphs" stroke="#111" stroke-width="0.12" >Perc. Desconto</text>
<text x="678.4" y="155" font-size="9.2" fill="#111" text-anchor="start" font-weight="normal" textLength="60.5" lengthAdjust="spacingAndGlyphs" stroke="#111" stroke-width="0.12" >Valor Desconto</text>
<text x="744.9" y="155" font-size="9.2" fill="#111" text-anchor="start" font-weight="normal" textLength="77.1" lengthAdjust="spacingAndGlyphs" stroke="#111" stroke-width="0.12" >Cód. Nat. Operação</text>
<text x="57.2" y="167.7" font-size="9.2" fill="#111" text-anchor="end" font-weight="normal" textLength="3.8" lengthAdjust="spacingAndGlyphs" stroke="#111" stroke-width="0.12" >1</text>
<text x="57.2" y="180.3" font-size="9.2" fill="#111" text-anchor="end" font-weight="normal" textLength="4.2" lengthAdjust="spacingAndGlyphs" stroke="#111" stroke-width="0.12" >2</text>
<text x="61" y="167.7" font-size="9.2" fill="#111" text-anchor="start" font-weight="normal" textLength="44.6" lengthAdjust="spacingAndGlyphs" stroke="#111" stroke-width="0.12" >0000000001</text>
<text x="61" y="180.3" font-size="9.2" fill="#111" text-anchor="start" font-weight="normal" textLength="44.6" lengthAdjust="spacingAndGlyphs" stroke="#111" stroke-width="0.12" >0000000026</text>
<path d="M59 158.1h4.2l-4.2 3.9z" fill="#1e7a3a" />
<path d="M59 171h4.2l-4.2 3.9z" fill="#1e7a3a" />
<text x="168.4" y="167.7" font-size="9.2" fill="#111" text-anchor="start" font-weight="normal" textLength="15" lengthAdjust="spacingAndGlyphs" stroke="#111" stroke-width="0.12" >P01</text>
<text x="168.4" y="180.3" font-size="9.2" fill="#111" text-anchor="start" font-weight="normal" textLength="32.8" lengthAdjust="spacingAndGlyphs" stroke="#111" stroke-width="0.12" >AÇUCAR</text>
<text x="353.6" y="167.7" font-size="9.2" fill="#111" text-anchor="end" font-weight="normal" textLength="4.2" lengthAdjust="spacingAndGlyphs" stroke="#111" stroke-width="0.12" >3</text>
<text x="353.6" y="180.3" font-size="9.2" fill="#111" text-anchor="end" font-weight="normal" textLength="15.6" lengthAdjust="spacingAndGlyphs" stroke="#111" stroke-width="0.12" >2,33</text>
<text x="475.1" y="167.7" font-size="9.2" fill="#111" text-anchor="end" font-weight="normal" textLength="14.2" lengthAdjust="spacingAndGlyphs" stroke="#111" stroke-width="0.12" >100</text>
<text x="475.1" y="180.3" font-size="9.2" fill="#111" text-anchor="end" font-weight="normal" textLength="17.9" lengthAdjust="spacingAndGlyphs" stroke="#111" stroke-width="0.12" >4,29</text>
<text x="547.1" y="167.7" font-size="9.2" fill="#111" text-anchor="end" font-weight="normal" textLength="43.2" lengthAdjust="spacingAndGlyphs" stroke="#111" stroke-width="0.12" >16/06/2025</text>
<text x="547.1" y="180.3" font-size="9.2" fill="#111" text-anchor="end" font-weight="normal" textLength="43.2" lengthAdjust="spacingAndGlyphs" stroke="#111" stroke-width="0.12" >16/06/2025</text>
<text x="744.9" y="167.7" font-size="9.2" fill="#111" text-anchor="start" font-weight="normal" textLength="32.4" lengthAdjust="spacingAndGlyphs" stroke="#111" stroke-width="0.12" >1.102-04</text>
<text x="744.9" y="180.3" font-size="9.2" fill="#111" text-anchor="start" font-weight="normal" textLength="32.4" lengthAdjust="spacingAndGlyphs" stroke="#111" stroke-width="0.12" >1.102-03</text>
<rect x="676.6" y="170.6" width="66.4" height="12.4" fill="none" stroke="#217346" stroke-width="1.4" />
<rect x="741.5" y="181.5" width="2.6" height="2.6" fill="#217346" />
<path d="M313.2 204.7L326.6 206.9L323.2 210.2L377.9 251.8L377.2 252.6L320.6 213.8L318.2 217Z" fill="#7a7a7a" opacity="0.35" transform="translate(1,1.3)"/>
<path d="M313.2 204.7L326.6 206.9L323.2 210.2L377.9 251.8L377.2 252.6L320.6 213.8L318.2 217Z" fill="#1f5fc5" />
<text x="342.6" y="267.5" font-size="10.8" fill="#8a8a8a" stroke="#8a8a8a" stroke-width="0.2" font-weight="bold" textLength="280" lengthAdjust="spacingAndGlyphs" opacity="0.45">Preenchido com os dados de itens a serem importados !</text>
<text x="342.1" y="266.1" font-size="10.8" fill="#2a6acd" text-anchor="start" font-weight="bold" textLength="280" lengthAdjust="spacingAndGlyphs" stroke="#2a6acd" stroke-width="0.1" >Preenchido com os dados de itens a serem importados !</text>
<clipPath id="sc"><rect x="16" y="196.5" width="851" height="239"/></clipPath>
<g clip-path="url(#sc)">
<text x="17.8" y="263.7" font-size="8.0" fill="#4646e6" text-anchor="start" font-weight="normal" textLength="8.52" lengthAdjust="spacingAndGlyphs" stroke="#4646e6" stroke-width="0.05">**</text>
<text x="28.25" y="263.7" font-size="8.0" fill="#4646e6" text-anchor="start" font-weight="normal" textLength="14.95" lengthAdjust="spacingAndGlyphs" stroke="#4646e6" stroke-width="0.05">Dica</text>
<text x="45.14" y="263.7" font-size="8.0" fill="#4646e6" text-anchor="start" font-weight="normal" textLength="15.68" lengthAdjust="spacingAndGlyphs" stroke="#4646e6" stroke-width="0.05">para</text>
<text x="62.76" y="263.7" font-size="8.0" fill="#4646e6" text-anchor="start" font-weight="normal" textLength="35.89" lengthAdjust="spacingAndGlyphs" stroke="#4646e6" stroke-width="0.05">INCLUSÃO</text>
<text x="100.59" y="263.7" font-size="8.0" fill="#4646e6" text-anchor="start" font-weight="normal" textLength="8.76" lengthAdjust="spacingAndGlyphs" stroke="#4646e6" stroke-width="0.05">de</text>
<text x="111.28" y="263.7" font-size="8.0" fill="#4646e6" text-anchor="start" font-weight="normal" textLength="16.94" lengthAdjust="spacingAndGlyphs" stroke="#4646e6" stroke-width="0.05">itens</text>
<text x="130.15" y="263.7" font-size="8.0" fill="#4646e6" text-anchor="start" font-weight="normal" textLength="9.01" lengthAdjust="spacingAndGlyphs" stroke="#4646e6" stroke-width="0.05">no</text>
<text x="141.1" y="263.7" font-size="8.0" fill="#4646e6" text-anchor="start" font-weight="normal" textLength="26.96" lengthAdjust="spacingAndGlyphs" stroke="#4646e6" stroke-width="0.05">PEDIDO</text>
<text x="169.99" y="263.7" font-size="8.0" fill="#4646e6" text-anchor="start" font-weight="normal" textLength="9.45" lengthAdjust="spacingAndGlyphs" stroke="#4646e6" stroke-width="0.05">DE</text>
<text x="181.37" y="263.7" font-size="8.0" fill="#4646e6" text-anchor="start" font-weight="normal" textLength="31.57" lengthAdjust="spacingAndGlyphs" stroke="#4646e6" stroke-width="0.05">COMPRA</text>
<text x="214.88" y="263.7" font-size="8.0" fill="#4646e6" text-anchor="start" font-weight="normal" textLength="8.52" lengthAdjust="spacingAndGlyphs" stroke="#4646e6" stroke-width="0.05">**</text>
<text x="17.3" y="286.1" font-size="8.0" fill="#4646e6" text-anchor="start" font-weight="normal" textLength="20.53" lengthAdjust="spacingAndGlyphs" stroke="#4646e6" stroke-width="0.05">Ajuda</text>
<text x="39.81" y="286.1" font-size="8.0" fill="#4646e6" text-anchor="start" font-weight="normal" textLength="16.02" lengthAdjust="spacingAndGlyphs" stroke="#4646e6" stroke-width="0.05">para</text>
<text x="57.81" y="286.1" font-size="8.0" fill="#4646e6" text-anchor="start" font-weight="normal" textLength="54.64" lengthAdjust="spacingAndGlyphs" stroke="#4646e6" stroke-width="0.05">Preenchimento</text>
<text x="114.43" y="286.1" font-size="8.0" fill="#4646e6" text-anchor="start" font-weight="normal" textLength="12.63" lengthAdjust="spacingAndGlyphs" stroke="#4646e6" stroke-width="0.05">dos</text>
<text x="129.03" y="286.1" font-size="8.0" fill="#4646e6" text-anchor="start" font-weight="normal" textLength="28.47" lengthAdjust="spacingAndGlyphs" stroke="#4646e6" stroke-width="0.05">Campos</text>
<text x="21.7" y="296.7" font-size="8.0" fill="#4646e6" text-anchor="start" font-weight="normal" textLength="14.89" lengthAdjust="spacingAndGlyphs" stroke="#4646e6" stroke-width="0.05">Seq.</text>
<text x="38.53" y="296.7" font-size="8.0" fill="#4646e6" text-anchor="start" font-weight="normal" textLength="18.46" lengthAdjust="spacingAndGlyphs" stroke="#4646e6" stroke-width="0.05">Item:</text>
<text x="58.93" y="296.7" font-size="8.0" fill="#4646e6" text-anchor="start" font-weight="normal" textLength="24.58" lengthAdjust="spacingAndGlyphs" stroke="#4646e6" stroke-width="0.05">Campo</text>
<text x="85.45" y="296.7" font-size="8.0" fill="#4646e6" text-anchor="start" font-weight="normal" textLength="16.19" lengthAdjust="spacingAndGlyphs" stroke="#4646e6" stroke-width="0.05">NÃO</text>
<text x="103.57" y="296.7" font-size="8.0" fill="#4646e6" text-anchor="start" font-weight="normal" textLength="42.33" lengthAdjust="spacingAndGlyphs" stroke="#4646e6" stroke-width="0.05">Obrigatório,</text>
<text x="147.85" y="296.7" font-size="8.0" fill="#4646e6" text-anchor="start" font-weight="normal" textLength="30.66" lengthAdjust="spacingAndGlyphs" stroke="#4646e6" stroke-width="0.05">somente</text>
<text x="180.45" y="296.7" font-size="8.0" fill="#4646e6" text-anchor="start" font-weight="normal" textLength="15.72" lengthAdjust="spacingAndGlyphs" stroke="#4646e6" stroke-width="0.05">para</text>
<text x="198.11" y="296.7" font-size="8.0" fill="#4646e6" text-anchor="start" font-weight="normal" textLength="30.24" lengthAdjust="spacingAndGlyphs" stroke="#4646e6" stroke-width="0.05">Controle</text>
<text x="230.29" y="296.7" font-size="8.0" fill="#4646e6" text-anchor="start" font-weight="normal" textLength="8.78" lengthAdjust="spacingAndGlyphs" stroke="#4646e6" stroke-width="0.05">de</text>
<text x="241.01" y="296.7" font-size="8.0" fill="#4646e6" text-anchor="start" font-weight="normal" textLength="37.89" lengthAdjust="spacingAndGlyphs" stroke="#4646e6" stroke-width="0.05">Sequencia.</text>
<text x="21.8" y="307.7" font-size="8.0" fill="#4646e6" text-anchor="start" font-weight="normal" textLength="24.06" lengthAdjust="spacingAndGlyphs" stroke="#4646e6" stroke-width="0.05">Código</text>
<text x="47.8" y="307.7" font-size="8.0" fill="#4646e6" text-anchor="start" font-weight="normal" textLength="16.11" lengthAdjust="spacingAndGlyphs" stroke="#4646e6" stroke-width="0.05">Item</text>
<text x="65.84" y="307.7" font-size="8.0" fill="#4646e6" text-anchor="start" font-weight="normal" textLength="39.7" lengthAdjust="spacingAndGlyphs" stroke="#4646e6" stroke-width="0.05">(Reduzido):</text>
<text x="107.47" y="307.7" font-size="8.0" fill="#4646e6" text-anchor="start" font-weight="normal" textLength="24.06" lengthAdjust="spacingAndGlyphs" stroke="#4646e6" stroke-width="0.05">Código</text>
<text x="133.47" y="307.7" font-size="8.0" fill="#4646e6" text-anchor="start" font-weight="normal" textLength="32.23" lengthAdjust="spacingAndGlyphs" stroke="#4646e6" stroke-width="0.05">Reduzido</text>
<text x="167.63" y="307.7" font-size="8.0" fill="#4646e6" text-anchor="start" font-weight="normal" textLength="9.0" lengthAdjust="spacingAndGlyphs" stroke="#4646e6" stroke-width="0.05">do</text>
<text x="178.57" y="307.7" font-size="8.0" fill="#4646e6" text-anchor="start" font-weight="normal" textLength="16.11" lengthAdjust="spacingAndGlyphs" stroke="#4646e6" stroke-width="0.05">Item</text>
<text x="196.61" y="307.7" font-size="8.0" fill="#4646e6" text-anchor="start" font-weight="normal" textLength="9.0" lengthAdjust="spacingAndGlyphs" stroke="#4646e6" stroke-width="0.05">no</text>
<text x="207.55" y="307.7" font-size="8.0" fill="#4646e6" text-anchor="start" font-weight="normal" textLength="27.29" lengthAdjust="spacingAndGlyphs" stroke="#4646e6" stroke-width="0.05">Sistema</text>
<text x="236.76" y="307.7" font-size="8.0" fill="#4646e6" text-anchor="start" font-weight="normal" textLength="21.44" lengthAdjust="spacingAndGlyphs" stroke="#4646e6" stroke-width="0.05">MBM.</text>
<text x="21.8" y="318.7" font-size="8.0" fill="#4646e6" text-anchor="start" font-weight="normal" textLength="24.03" lengthAdjust="spacingAndGlyphs" stroke="#4646e6" stroke-width="0.05">Código</text>
<text x="47.76" y="318.7" font-size="8.0" fill="#4646e6" text-anchor="start" font-weight="normal" textLength="18.37" lengthAdjust="spacingAndGlyphs" stroke="#4646e6" stroke-width="0.05">Item:</text>
<text x="68.06" y="318.7" font-size="8.0" fill="#4646e6" text-anchor="start" font-weight="normal" textLength="24.03" lengthAdjust="spacingAndGlyphs" stroke="#4646e6" stroke-width="0.05">Código</text>
<text x="94.03" y="318.7" font-size="8.0" fill="#4646e6" text-anchor="start" font-weight="normal" textLength="8.74" lengthAdjust="spacingAndGlyphs" stroke="#4646e6" stroke-width="0.05">de</text>
<text x="104.69" y="318.7" font-size="8.0" fill="#4646e6" text-anchor="start" font-weight="normal" textLength="37.12" lengthAdjust="spacingAndGlyphs" stroke="#4646e6" stroke-width="0.05">Referência</text>
<text x="143.75" y="318.7" font-size="8.0" fill="#4646e6" text-anchor="start" font-weight="normal" textLength="8.99" lengthAdjust="spacingAndGlyphs" stroke="#4646e6" stroke-width="0.05">do</text>
<text x="154.67" y="318.7" font-size="8.0" fill="#4646e6" text-anchor="start" font-weight="normal" textLength="16.09" lengthAdjust="spacingAndGlyphs" stroke="#4646e6" stroke-width="0.05">Item</text>
<text x="172.69" y="318.7" font-size="8.0" fill="#4646e6" text-anchor="start" font-weight="normal" textLength="8.99" lengthAdjust="spacingAndGlyphs" stroke="#4646e6" stroke-width="0.05">no</text>
<text x="183.61" y="318.7" font-size="8.0" fill="#4646e6" text-anchor="start" font-weight="normal" textLength="27.25" lengthAdjust="spacingAndGlyphs" stroke="#4646e6" stroke-width="0.05">Sistema</text>
<text x="212.79" y="318.7" font-size="8.0" fill="#4646e6" text-anchor="start" font-weight="normal" textLength="21.41" lengthAdjust="spacingAndGlyphs" stroke="#4646e6" stroke-width="0.05">MBM.</text>
<text x="21.8" y="329.7" font-size="8.0" fill="#4646e6" text-anchor="start" font-weight="normal" textLength="36.16" lengthAdjust="spacingAndGlyphs" stroke="#4646e6" stroke-width="0.05">ATENÇÃO:</text>
<text x="59.89" y="329.7" font-size="8.0" fill="#4646e6" text-anchor="start" font-weight="normal" textLength="4.16" lengthAdjust="spacingAndGlyphs" stroke="#4646e6" stroke-width="0.05">É</text>
<text x="65.98" y="329.7" font-size="8.0" fill="#4646e6" text-anchor="start" font-weight="normal" textLength="49.6" lengthAdjust="spacingAndGlyphs" stroke="#4646e6" stroke-width="0.05">OBRIGATÓRIO</text>
<text x="117.51" y="329.7" font-size="8.0" fill="#4646e6" text-anchor="start" font-weight="normal" textLength="4.5" lengthAdjust="spacingAndGlyphs" stroke="#4646e6" stroke-width="0.05">o</text>
<text x="123.93" y="329.7" font-size="8.0" fill="#4646e6" text-anchor="start" font-weight="normal" textLength="53.35" lengthAdjust="spacingAndGlyphs" stroke="#4646e6" stroke-width="0.05">preenchimento</text>
<text x="179.2" y="329.7" font-size="8.0" fill="#4646e6" text-anchor="start" font-weight="normal" textLength="8.72" lengthAdjust="spacingAndGlyphs" stroke="#4646e6" stroke-width="0.05">de</text>
<text x="189.85" y="329.7" font-size="8.0" fill="#4646e6" text-anchor="start" font-weight="normal" textLength="11.29" lengthAdjust="spacingAndGlyphs" stroke="#4646e6" stroke-width="0.05">um</text>
<text x="203.07" y="329.7" font-size="8.0" fill="#4646e6" text-anchor="start" font-weight="normal" textLength="12.31" lengthAdjust="spacingAndGlyphs" stroke="#4646e6" stroke-width="0.05">dos</text>
<text x="217.31" y="329.7" font-size="8.0" fill="#4646e6" text-anchor="start" font-weight="normal" textLength="27.75" lengthAdjust="spacingAndGlyphs" stroke="#4646e6" stroke-width="0.05">Campos</text>
<text x="246.99" y="329.7" font-size="8.0" fill="#4646e6" text-anchor="start" font-weight="normal" textLength="27.4" lengthAdjust="spacingAndGlyphs" stroke="#4646e6" stroke-width="0.05">&quot;Código</text>
<text x="276.32" y="329.7" font-size="8.0" fill="#4646e6" text-anchor="start" font-weight="normal" textLength="16.06" lengthAdjust="spacingAndGlyphs" stroke="#4646e6" stroke-width="0.05">Item</text>
<text x="294.3" y="329.7" font-size="8.0" fill="#4646e6" text-anchor="start" font-weight="normal" textLength="40.71" lengthAdjust="spacingAndGlyphs" stroke="#4646e6" stroke-width="0.05">(Reduzido)&quot;</text>
<text x="336.95" y="329.7" font-size="8.0" fill="#4646e6" text-anchor="start" font-weight="normal" textLength="11.12" lengthAdjust="spacingAndGlyphs" stroke="#4646e6" stroke-width="0.05">OU</text>
<text x="349.99" y="329.7" font-size="8.0" fill="#4646e6" text-anchor="start" font-weight="normal" textLength="27.4" lengthAdjust="spacingAndGlyphs" stroke="#4646e6" stroke-width="0.05">&quot;Código</text>
<text x="379.32" y="329.7" font-size="8.0" fill="#4646e6" text-anchor="start" font-weight="normal" textLength="19.47" lengthAdjust="spacingAndGlyphs" stroke="#4646e6" stroke-width="0.05">Item&quot;</text>
<text x="400.71" y="329.7" font-size="8.0" fill="#4646e6" text-anchor="start" font-weight="normal" textLength="15.62" lengthAdjust="spacingAndGlyphs" stroke="#4646e6" stroke-width="0.05">para</text>
<text x="418.26" y="329.7" font-size="8.0" fill="#4646e6" text-anchor="start" font-weight="normal" textLength="44.6" lengthAdjust="spacingAndGlyphs" stroke="#4646e6" stroke-width="0.05">Identificação</text>
<text x="464.79" y="329.7" font-size="8.0" fill="#4646e6" text-anchor="start" font-weight="normal" textLength="8.98" lengthAdjust="spacingAndGlyphs" stroke="#4646e6" stroke-width="0.05">do</text>
<text x="475.69" y="329.7" font-size="8.0" fill="#4646e6" text-anchor="start" font-weight="normal" textLength="18.21" lengthAdjust="spacingAndGlyphs" stroke="#4646e6" stroke-width="0.05">Item.</text>
<text x="25.8" y="340.8" font-size="8.0" fill="#4646e6" text-anchor="start" font-weight="normal" textLength="16.95" lengthAdjust="spacingAndGlyphs" stroke="#4646e6" stroke-width="0.05">Caso</text>
<text x="44.74" y="340.8" font-size="8.0" fill="#4646e6" text-anchor="start" font-weight="normal" textLength="14.11" lengthAdjust="spacingAndGlyphs" stroke="#4646e6" stroke-width="0.05">seja</text>
<text x="60.83" y="340.8" font-size="8.0" fill="#4646e6" text-anchor="start" font-weight="normal" textLength="37.46" lengthAdjust="spacingAndGlyphs" stroke="#4646e6" stroke-width="0.05">informado</text>
<text x="100.28" y="340.8" font-size="8.0" fill="#4646e6" text-anchor="start" font-weight="normal" textLength="8.06" lengthAdjust="spacingAndGlyphs" stroke="#4646e6" stroke-width="0.05">os</text>
<text x="110.33" y="340.8" font-size="8.0" fill="#4646e6" text-anchor="start" font-weight="normal" textLength="4.45" lengthAdjust="spacingAndGlyphs" stroke="#4646e6" stroke-width="0.05">2</text>
<text x="116.77" y="340.8" font-size="8.0" fill="#4646e6" text-anchor="start" font-weight="normal" textLength="29.8" lengthAdjust="spacingAndGlyphs" stroke="#4646e6" stroke-width="0.05">campos,</text>
<text x="148.56" y="340.8" font-size="8.0" fill="#4646e6" text-anchor="start" font-weight="normal" textLength="4.63" lengthAdjust="spacingAndGlyphs" stroke="#4646e6" stroke-width="0.05">o</text>
<text x="155.17" y="340.8" font-size="8.0" fill="#4646e6" text-anchor="start" font-weight="normal" textLength="16.34" lengthAdjust="spacingAndGlyphs" stroke="#4646e6" stroke-width="0.05">item</text>
<text x="173.5" y="340.8" font-size="8.0" fill="#4646e6" text-anchor="start" font-weight="normal" textLength="15.07" lengthAdjust="spacingAndGlyphs" stroke="#4646e6" stroke-width="0.05">será</text>
<text x="190.56" y="340.8" font-size="8.0" fill="#4646e6" text-anchor="start" font-weight="normal" textLength="35.51" lengthAdjust="spacingAndGlyphs" stroke="#4646e6" stroke-width="0.05">localizado</text>
<text x="228.05" y="340.8" font-size="8.0" fill="#4646e6" text-anchor="start" font-weight="normal" textLength="15.63" lengthAdjust="spacingAndGlyphs" stroke="#4646e6" stroke-width="0.05">pelo</text>
<text x="245.67" y="340.8" font-size="8.0" fill="#4646e6" text-anchor="start" font-weight="normal" textLength="24.18" lengthAdjust="spacingAndGlyphs" stroke="#4646e6" stroke-width="0.05">campo</text>
<text x="271.83" y="340.8" font-size="8.0" fill="#4646e6" text-anchor="start" font-weight="normal" textLength="28.22" lengthAdjust="spacingAndGlyphs" stroke="#4646e6" stroke-width="0.05">&quot;Código</text>
<text x="302.03" y="340.8" font-size="8.0" fill="#4646e6" text-anchor="start" font-weight="normal" textLength="16.54" lengthAdjust="spacingAndGlyphs" stroke="#4646e6" stroke-width="0.05">Item</text>
<text x="320.55" y="340.8" font-size="8.0" fill="#4646e6" text-anchor="start" font-weight="normal" textLength="44.15" lengthAdjust="spacingAndGlyphs" stroke="#4646e6" stroke-width="0.05">(Reduzido)&quot;.</text>
<text x="22.1" y="351.9" font-size="8.0" fill="#4646e6" text-anchor="start" font-weight="normal" textLength="34.18" lengthAdjust="spacingAndGlyphs" stroke="#4646e6" stroke-width="0.05">Descrição</text>
<text x="58.25" y="351.9" font-size="8.0" fill="#4646e6" text-anchor="start" font-weight="normal" textLength="18.69" lengthAdjust="spacingAndGlyphs" stroke="#4646e6" stroke-width="0.05">Item:</text>
<text x="78.9" y="351.9" font-size="8.0" fill="#4646e6" text-anchor="start" font-weight="normal" textLength="24.88" lengthAdjust="spacingAndGlyphs" stroke="#4646e6" stroke-width="0.05">Campo</text>
<text x="105.75" y="351.9" font-size="8.0" fill="#4646e6" text-anchor="start" font-weight="normal" textLength="16.39" lengthAdjust="spacingAndGlyphs" stroke="#4646e6" stroke-width="0.05">NÃO</text>
<text x="124.11" y="351.9" font-size="8.0" fill="#4646e6" text-anchor="start" font-weight="normal" textLength="52.74" lengthAdjust="spacingAndGlyphs" stroke="#4646e6" stroke-width="0.05">OBRIGATÓRIO.</text>
<text x="178.81" y="351.9" font-size="8.0" fill="#4646e6" text-anchor="start" font-weight="normal" textLength="23.37" lengthAdjust="spacingAndGlyphs" stroke="#4646e6" stroke-width="0.05">Porém</text>
<text x="204.14" y="351.9" font-size="8.0" fill="#4646e6" text-anchor="start" font-weight="normal" textLength="7.72" lengthAdjust="spacingAndGlyphs" stroke="#4646e6" stroke-width="0.05">se</text>
<text x="213.83" y="351.9" font-size="8.0" fill="#4646e6" text-anchor="start" font-weight="normal" textLength="40.19" lengthAdjust="spacingAndGlyphs" stroke="#4646e6" stroke-width="0.05">preenchido</text>
<text x="255.98" y="351.9" font-size="8.0" fill="#4646e6" text-anchor="start" font-weight="normal" textLength="14.91" lengthAdjust="spacingAndGlyphs" stroke="#4646e6" stroke-width="0.05">será</text>
<text x="272.86" y="351.9" font-size="8.0" fill="#4646e6" text-anchor="start" font-weight="normal" textLength="23.55" lengthAdjust="spacingAndGlyphs" stroke="#4646e6" stroke-width="0.05">levado</text>
<text x="298.38" y="351.9" font-size="8.0" fill="#4646e6" text-anchor="start" font-weight="normal" textLength="4.16" lengthAdjust="spacingAndGlyphs" stroke="#4646e6" stroke-width="0.05">a</text>
<text x="304.5" y="351.9" font-size="8.0" fill="#4646e6" text-anchor="start" font-weight="normal" textLength="25.77" lengthAdjust="spacingAndGlyphs" stroke="#4646e6" stroke-width="0.05">mesma</text>
<text x="332.23" y="351.9" font-size="8.0" fill="#4646e6" text-anchor="start" font-weight="normal" textLength="15.92" lengthAdjust="spacingAndGlyphs" stroke="#4646e6" stroke-width="0.05">para</text>
<text x="350.12" y="351.9" font-size="8.0" fill="#4646e6" text-anchor="start" font-weight="normal" textLength="4.16" lengthAdjust="spacingAndGlyphs" stroke="#4646e6" stroke-width="0.05">a</text>
<text x="356.24" y="351.9" font-size="8.0" fill="#4646e6" text-anchor="start" font-weight="normal" textLength="33.4" lengthAdjust="spacingAndGlyphs" stroke="#4646e6" stroke-width="0.05">descrição</text>
<text x="391.61" y="351.9" font-size="8.0" fill="#4646e6" text-anchor="start" font-weight="normal" textLength="9.15" lengthAdjust="spacingAndGlyphs" stroke="#4646e6" stroke-width="0.05">do</text>
<text x="402.73" y="351.9" font-size="8.0" fill="#4646e6" text-anchor="start" font-weight="normal" textLength="16.17" lengthAdjust="spacingAndGlyphs" stroke="#4646e6" stroke-width="0.05">item</text>
<text x="420.86" y="351.9" font-size="8.0" fill="#4646e6" text-anchor="start" font-weight="normal" textLength="8.73" lengthAdjust="spacingAndGlyphs" stroke="#4646e6" stroke-width="0.05">da</text>
<text x="431.55" y="351.9" font-size="8.0" fill="#4646e6" text-anchor="start" font-weight="normal" textLength="29.15" lengthAdjust="spacingAndGlyphs" stroke="#4646e6" stroke-width="0.05">compra.</text>
<text x="21.8" y="362.9" font-size="8.0" fill="#4646e6" text-anchor="start" font-weight="normal" textLength="19.84" lengthAdjust="spacingAndGlyphs" stroke="#4646e6" stroke-width="0.05">Qtde.</text>
<text x="43.6" y="362.9" font-size="8.0" fill="#4646e6" text-anchor="start" font-weight="normal" textLength="26.42" lengthAdjust="spacingAndGlyphs" stroke="#4646e6" stroke-width="0.05">Pedida:</text>
<text x="71.99" y="362.9" font-size="8.0" fill="#4646e6" text-anchor="start" font-weight="normal" textLength="24.88" lengthAdjust="spacingAndGlyphs" stroke="#4646e6" stroke-width="0.05">Campo</text>
<text x="98.84" y="362.9" font-size="8.0" fill="#4646e6" text-anchor="start" font-weight="normal" textLength="52.74" lengthAdjust="spacingAndGlyphs" stroke="#4646e6" stroke-width="0.05">OBRIGATÓRIO.</text>
<text x="153.54" y="362.9" font-size="8.0" fill="#4646e6" text-anchor="start" font-weight="normal" textLength="33.03" lengthAdjust="spacingAndGlyphs" stroke="#4646e6" stroke-width="0.05">Identifica</text>
<text x="188.54" y="362.9" font-size="8.0" fill="#4646e6" text-anchor="start" font-weight="normal" textLength="4.16" lengthAdjust="spacingAndGlyphs" stroke="#4646e6" stroke-width="0.05">a</text>
<text x="194.67" y="362.9" font-size="8.0" fill="#4646e6" text-anchor="start" font-weight="normal" textLength="41.66" lengthAdjust="spacingAndGlyphs" stroke="#4646e6" stroke-width="0.05">Quantidade</text>
<text x="238.29" y="362.9" font-size="8.0" fill="#4646e6" text-anchor="start" font-weight="normal" textLength="8.89" lengthAdjust="spacingAndGlyphs" stroke="#4646e6" stroke-width="0.05">de</text>
<text x="249.14" y="362.9" font-size="8.0" fill="#4646e6" text-anchor="start" font-weight="normal" textLength="17.39" lengthAdjust="spacingAndGlyphs" stroke="#4646e6" stroke-width="0.05">Itens</text>
<text x="268.49" y="362.9" font-size="8.0" fill="#4646e6" text-anchor="start" font-weight="normal" textLength="8.73" lengthAdjust="spacingAndGlyphs" stroke="#4646e6" stroke-width="0.05">na</text>
<text x="279.19" y="362.9" font-size="8.0" fill="#4646e6" text-anchor="start" font-weight="normal" textLength="29.75" lengthAdjust="spacingAndGlyphs" stroke="#4646e6" stroke-width="0.05">Unidade</text>
<text x="310.9" y="362.9" font-size="8.0" fill="#4646e6" text-anchor="start" font-weight="normal" textLength="4.16" lengthAdjust="spacingAndGlyphs" stroke="#4646e6" stroke-width="0.05">a</text>
<text x="317.03" y="362.9" font-size="8.0" fill="#4646e6" text-anchor="start" font-weight="normal" textLength="22.02" lengthAdjust="spacingAndGlyphs" stroke="#4646e6" stroke-width="0.05">serem</text>
<text x="341.01" y="362.9" font-size="8.0" fill="#4646e6" text-anchor="start" font-weight="normal" textLength="31.33" lengthAdjust="spacingAndGlyphs" stroke="#4646e6" stroke-width="0.05">incluidos</text>
<text x="374.31" y="362.9" font-size="8.0" fill="#4646e6" text-anchor="start" font-weight="normal" textLength="9.15" lengthAdjust="spacingAndGlyphs" stroke="#4646e6" stroke-width="0.05">no</text>
<text x="385.42" y="362.9" font-size="8.0" fill="#4646e6" text-anchor="start" font-weight="normal" textLength="24.52" lengthAdjust="spacingAndGlyphs" stroke="#4646e6" stroke-width="0.05">Pedido</text>
<text x="411.9" y="362.9" font-size="8.0" fill="#4646e6" text-anchor="start" font-weight="normal" textLength="8.89" lengthAdjust="spacingAndGlyphs" stroke="#4646e6" stroke-width="0.05">de</text>
<text x="422.75" y="362.9" font-size="8.0" fill="#4646e6" text-anchor="start" font-weight="normal" textLength="30.11" lengthAdjust="spacingAndGlyphs" stroke="#4646e6" stroke-width="0.05">Compra.</text>
<text x="454.83" y="362.9" font-size="8.0" fill="#4646e6" text-anchor="start" font-weight="normal" textLength="30.2" lengthAdjust="spacingAndGlyphs" stroke="#4646e6" stroke-width="0.05">Formato</text>
<text x="486.99" y="362.9" font-size="8.0" fill="#4646e6" text-anchor="start" font-weight="normal" textLength="4.16" lengthAdjust="spacingAndGlyphs" stroke="#4646e6" stroke-width="0.05">a</text>
<text x="493.12" y="362.9" font-size="8.0" fill="#4646e6" text-anchor="start" font-weight="normal" textLength="23.73" lengthAdjust="spacingAndGlyphs" stroke="#4646e6" stroke-width="0.05">seguir:</text>
<text x="518.81" y="362.9" font-size="8.0" fill="#4646e6" text-anchor="start" font-weight="normal" textLength="28.59" lengthAdjust="spacingAndGlyphs" stroke="#4646e6" stroke-width="0.05">1234,56</text>
<text x="21.8" y="373.9" font-size="8.0" fill="#4646e6" text-anchor="start" font-weight="normal" textLength="18.98" lengthAdjust="spacingAndGlyphs" stroke="#4646e6" stroke-width="0.05">Unid.</text>
<text x="42.75" y="373.9" font-size="8.0" fill="#4646e6" text-anchor="start" font-weight="normal" textLength="30.37" lengthAdjust="spacingAndGlyphs" stroke="#4646e6" stroke-width="0.05">Compra:</text>
<text x="75.09" y="373.9" font-size="8.0" fill="#4646e6" text-anchor="start" font-weight="normal" textLength="24.99" lengthAdjust="spacingAndGlyphs" stroke="#4646e6" stroke-width="0.05">Campo</text>
<text x="102.06" y="373.9" font-size="8.0" fill="#4646e6" text-anchor="start" font-weight="normal" textLength="16.46" lengthAdjust="spacingAndGlyphs" stroke="#4646e6" stroke-width="0.05">NÃO</text>
<text x="120.49" y="373.9" font-size="8.0" fill="#4646e6" text-anchor="start" font-weight="normal" textLength="52.97" lengthAdjust="spacingAndGlyphs" stroke="#4646e6" stroke-width="0.05">OBRIGATÓRIO.</text>
<text x="175.43" y="373.9" font-size="8.0" fill="#4646e6" text-anchor="start" font-weight="normal" textLength="16.85" lengthAdjust="spacingAndGlyphs" stroke="#4646e6" stroke-width="0.05">Caso</text>
<text x="194.26" y="373.9" font-size="8.0" fill="#4646e6" text-anchor="start" font-weight="normal" textLength="13.37" lengthAdjust="spacingAndGlyphs" stroke="#4646e6" stroke-width="0.05">não</text>
<text x="209.6" y="373.9" font-size="8.0" fill="#4646e6" text-anchor="start" font-weight="normal" textLength="14.02" lengthAdjust="spacingAndGlyphs" stroke="#4646e6" stroke-width="0.05">seja</text>
<text x="225.59" y="373.9" font-size="8.0" fill="#4646e6" text-anchor="start" font-weight="normal" textLength="37.24" lengthAdjust="spacingAndGlyphs" stroke="#4646e6" stroke-width="0.05">informado</text>
<text x="264.8" y="373.9" font-size="8.0" fill="#4646e6" text-anchor="start" font-weight="normal" textLength="14.98" lengthAdjust="spacingAndGlyphs" stroke="#4646e6" stroke-width="0.05">será</text>
<text x="281.75" y="373.9" font-size="8.0" fill="#4646e6" text-anchor="start" font-weight="normal" textLength="30.33" lengthAdjust="spacingAndGlyphs" stroke="#4646e6" stroke-width="0.05">utilizado</text>
<text x="314.06" y="373.9" font-size="8.0" fill="#4646e6" text-anchor="start" font-weight="normal" textLength="4.18" lengthAdjust="spacingAndGlyphs" stroke="#4646e6" stroke-width="0.05">a</text>
<text x="320.21" y="373.9" font-size="8.0" fill="#4646e6" text-anchor="start" font-weight="normal" textLength="28.87" lengthAdjust="spacingAndGlyphs" stroke="#4646e6" stroke-width="0.05">unidade</text>
<text x="351.05" y="373.9" font-size="8.0" fill="#4646e6" text-anchor="start" font-weight="normal" textLength="9.19" lengthAdjust="spacingAndGlyphs" stroke="#4646e6" stroke-width="0.05">do</text>
<text x="362.21" y="373.9" font-size="8.0" fill="#4646e6" text-anchor="start" font-weight="normal" textLength="30.62" lengthAdjust="spacingAndGlyphs" stroke="#4646e6" stroke-width="0.05">cadastro</text>
<text x="394.8" y="373.9" font-size="8.0" fill="#4646e6" text-anchor="start" font-weight="normal" textLength="9.19" lengthAdjust="spacingAndGlyphs" stroke="#4646e6" stroke-width="0.05">do</text>
<text x="405.96" y="373.9" font-size="8.0" fill="#4646e6" text-anchor="start" font-weight="normal" textLength="18.64" lengthAdjust="spacingAndGlyphs" stroke="#4646e6" stroke-width="0.05">Item.</text>
<text x="21.8" y="384.9" font-size="8.0" fill="#4646e6" text-anchor="start" font-weight="normal" textLength="19.85" lengthAdjust="spacingAndGlyphs" stroke="#4646e6" stroke-width="0.05">Preço</text>
<text x="43.6" y="384.9" font-size="8.0" fill="#4646e6" text-anchor="start" font-weight="normal" textLength="29.87" lengthAdjust="spacingAndGlyphs" stroke="#4646e6" stroke-width="0.05">Compra:</text>
<text x="75.41" y="384.9" font-size="8.0" fill="#4646e6" text-anchor="start" font-weight="normal" textLength="24.58" lengthAdjust="spacingAndGlyphs" stroke="#4646e6" stroke-width="0.05">Campo</text>
<text x="101.93" y="384.9" font-size="8.0" fill="#4646e6" text-anchor="start" font-weight="normal" textLength="16.19" lengthAdjust="spacingAndGlyphs" stroke="#4646e6" stroke-width="0.05">NÃO</text>
<text x="120.06" y="384.9" font-size="8.0" fill="#4646e6" text-anchor="start" font-weight="normal" textLength="49.93" lengthAdjust="spacingAndGlyphs" stroke="#4646e6" stroke-width="0.05">OBRIGATÓRIO</text>
<text x="171.94" y="384.9" font-size="8.0" fill="#4646e6" text-anchor="start" font-weight="normal" textLength="15.63" lengthAdjust="spacingAndGlyphs" stroke="#4646e6" stroke-width="0.05">caso</text>
<text x="189.5" y="384.9" font-size="8.0" fill="#4646e6" text-anchor="start" font-weight="normal" textLength="4.53" lengthAdjust="spacingAndGlyphs" stroke="#4646e6" stroke-width="0.05">o</text>
<text x="195.97" y="384.9" font-size="8.0" fill="#4646e6" text-anchor="start" font-weight="normal" textLength="37.25" lengthAdjust="spacingAndGlyphs" stroke="#4646e6" stroke-width="0.05">parâmetro</text>
<text x="235.16" y="384.9" font-size="8.0" fill="#4646e6" text-anchor="start" font-weight="normal" textLength="13.05" lengthAdjust="spacingAndGlyphs" stroke="#4646e6" stroke-width="0.05">372</text>
<text x="250.15" y="384.9" font-size="8.0" fill="#4646e6" text-anchor="start" font-weight="normal" textLength="20.94" lengthAdjust="spacingAndGlyphs" stroke="#4646e6" stroke-width="0.05">esteja</text>
<text x="273.03" y="384.9" font-size="8.0" fill="#4646e6" text-anchor="start" font-weight="normal" textLength="15.01" lengthAdjust="spacingAndGlyphs" stroke="#4646e6" stroke-width="0.05">com</text>
<text x="289.99" y="384.9" font-size="8.0" fill="#4646e6" text-anchor="start" font-weight="normal" textLength="11.37" lengthAdjust="spacingAndGlyphs" stroke="#4646e6" stroke-width="0.05">um</text>
<text x="303.3" y="384.9" font-size="8.0" fill="#4646e6" text-anchor="start" font-weight="normal" textLength="17.48" lengthAdjust="spacingAndGlyphs" stroke="#4646e6" stroke-width="0.05">valor</text>
<text x="322.72" y="384.9" font-size="8.0" fill="#4646e6" text-anchor="start" font-weight="normal" textLength="32.29" lengthAdjust="spacingAndGlyphs" stroke="#4646e6" stroke-width="0.05">diferente</text>
<text x="356.95" y="384.9" font-size="8.0" fill="#4646e6" text-anchor="start" font-weight="normal" textLength="8.78" lengthAdjust="spacingAndGlyphs" stroke="#4646e6" stroke-width="0.05">de</text>
<text x="367.67" y="384.9" font-size="8.0" fill="#4646e6" text-anchor="start" font-weight="normal" textLength="39.23" lengthAdjust="spacingAndGlyphs" stroke="#4646e6" stroke-width="0.05">&quot;Nenhum&quot;.</text>
<text x="25.8" y="395.9" font-size="8.0" fill="#4646e6" text-anchor="start" font-weight="normal" textLength="8.4" lengthAdjust="spacingAndGlyphs" stroke="#4646e6" stroke-width="0.05">Se</text>
<text x="36.18" y="395.9" font-size="8.0" fill="#4646e6" text-anchor="start" font-weight="normal" textLength="15.98" lengthAdjust="spacingAndGlyphs" stroke="#4646e6" stroke-width="0.05">caso</text>
<text x="54.15" y="395.9" font-size="8.0" fill="#4646e6" text-anchor="start" font-weight="normal" textLength="10.37" lengthAdjust="spacingAndGlyphs" stroke="#4646e6" stroke-width="0.05">for</text>
<text x="66.5" y="395.9" font-size="8.0" fill="#4646e6" text-anchor="start" font-weight="normal" textLength="21.97" lengthAdjust="spacingAndGlyphs" stroke="#4646e6" stroke-width="0.05">algum</text>
<text x="90.46" y="395.9" font-size="8.0" fill="#4646e6" text-anchor="start" font-weight="normal" textLength="17.87" lengthAdjust="spacingAndGlyphs" stroke="#4646e6" stroke-width="0.05">valor</text>
<text x="110.31" y="395.9" font-size="8.0" fill="#4646e6" text-anchor="start" font-weight="normal" textLength="33.02" lengthAdjust="spacingAndGlyphs" stroke="#4646e6" stroke-width="0.05">diferente</text>
<text x="145.32" y="395.9" font-size="8.0" fill="#4646e6" text-anchor="start" font-weight="normal" textLength="8.98" lengthAdjust="spacingAndGlyphs" stroke="#4646e6" stroke-width="0.05">de</text>
<text x="156.28" y="395.9" font-size="8.0" fill="#4646e6" text-anchor="start" font-weight="normal" textLength="32.02" lengthAdjust="spacingAndGlyphs" stroke="#4646e6" stroke-width="0.05">nenhum,</text>
<text x="190.28" y="395.9" font-size="8.0" fill="#4646e6" text-anchor="start" font-weight="normal" textLength="15.07" lengthAdjust="spacingAndGlyphs" stroke="#4646e6" stroke-width="0.05">será</text>
<text x="207.33" y="395.9" font-size="8.0" fill="#4646e6" text-anchor="start" font-weight="normal" textLength="32.57" lengthAdjust="spacingAndGlyphs" stroke="#4646e6" stroke-width="0.05">realizado</text>
<text x="241.89" y="395.9" font-size="8.0" fill="#4646e6" text-anchor="start" font-weight="normal" textLength="4.2" lengthAdjust="spacingAndGlyphs" stroke="#4646e6" stroke-width="0.05">a</text>
<text x="248.08" y="395.9" font-size="8.0" fill="#4646e6" text-anchor="start" font-weight="normal" textLength="20.71" lengthAdjust="spacingAndGlyphs" stroke="#4646e6" stroke-width="0.05">lógica</text>
<text x="270.77" y="395.9" font-size="8.0" fill="#4646e6" text-anchor="start" font-weight="normal" textLength="16.08" lengthAdjust="spacingAndGlyphs" stroke="#4646e6" stroke-width="0.05">para</text>
<text x="288.83" y="395.9" font-size="8.0" fill="#4646e6" text-anchor="start" font-weight="normal" textLength="35.2" lengthAdjust="spacingAndGlyphs" stroke="#4646e6" stroke-width="0.05">encontrar</text>
<text x="326.01" y="395.9" font-size="8.0" fill="#4646e6" text-anchor="start" font-weight="normal" textLength="4.63" lengthAdjust="spacingAndGlyphs" stroke="#4646e6" stroke-width="0.05">o</text>
<text x="332.63" y="395.9" font-size="8.0" fill="#4646e6" text-anchor="start" font-weight="normal" textLength="20.3" lengthAdjust="spacingAndGlyphs" stroke="#4646e6" stroke-width="0.05">Preço</text>
<text x="354.91" y="395.9" font-size="8.0" fill="#4646e6" text-anchor="start" font-weight="normal" textLength="34.7" lengthAdjust="spacingAndGlyphs" stroke="#4646e6" stroke-width="0.05">conforme</text>
<text x="391.6" y="395.9" font-size="8.0" fill="#4646e6" text-anchor="start" font-weight="normal" textLength="4.63" lengthAdjust="spacingAndGlyphs" stroke="#4646e6" stroke-width="0.05">o</text>
<text x="398.21" y="395.9" font-size="8.0" fill="#4646e6" text-anchor="start" font-weight="normal" textLength="40.28" lengthAdjust="spacingAndGlyphs" stroke="#4646e6" stroke-width="0.05">parâmetro,</text>
<text x="440.48" y="395.9" font-size="8.0" fill="#4646e6" text-anchor="start" font-weight="normal" textLength="15.98" lengthAdjust="spacingAndGlyphs" stroke="#4646e6" stroke-width="0.05">caso</text>
<text x="458.44" y="395.9" font-size="8.0" fill="#4646e6" text-anchor="start" font-weight="normal" textLength="13.45" lengthAdjust="spacingAndGlyphs" stroke="#4646e6" stroke-width="0.05">não</text>
<text x="473.87" y="395.9" font-size="8.0" fill="#4646e6" text-anchor="start" font-weight="normal" textLength="10.37" lengthAdjust="spacingAndGlyphs" stroke="#4646e6" stroke-width="0.05">for</text>
<text x="486.22" y="395.9" font-size="8.0" fill="#4646e6" text-anchor="start" font-weight="normal" textLength="37.45" lengthAdjust="spacingAndGlyphs" stroke="#4646e6" stroke-width="0.05">informado</text>
<text x="525.65" y="395.9" font-size="8.0" fill="#4646e6" text-anchor="start" font-weight="normal" textLength="17.87" lengthAdjust="spacingAndGlyphs" stroke="#4646e6" stroke-width="0.05">valor</text>
<text x="545.51" y="395.9" font-size="8.0" fill="#4646e6" text-anchor="start" font-weight="normal" textLength="19.72" lengthAdjust="spacingAndGlyphs" stroke="#4646e6" stroke-width="0.05">neste</text>
<text x="567.22" y="395.9" font-size="8.0" fill="#4646e6" text-anchor="start" font-weight="normal" textLength="26.38" lengthAdjust="spacingAndGlyphs" stroke="#4646e6" stroke-width="0.05">campo.</text>
<text x="25.8" y="406.9" font-size="8.0" fill="#4646e6" text-anchor="start" font-weight="normal" textLength="30.08" lengthAdjust="spacingAndGlyphs" stroke="#4646e6" stroke-width="0.05">Formato</text>
<text x="57.84" y="406.9" font-size="8.0" fill="#4646e6" text-anchor="start" font-weight="normal" textLength="4.15" lengthAdjust="spacingAndGlyphs" stroke="#4646e6" stroke-width="0.05">a</text>
<text x="63.94" y="406.9" font-size="8.0" fill="#4646e6" text-anchor="start" font-weight="normal" textLength="23.63" lengthAdjust="spacingAndGlyphs" stroke="#4646e6" stroke-width="0.05">seguir:</text>
<text x="89.53" y="406.9" font-size="8.0" fill="#4646e6" text-anchor="start" font-weight="normal" textLength="30.67" lengthAdjust="spacingAndGlyphs" stroke="#4646e6" stroke-width="0.05">1234,56.</text>
<text x="21.8" y="418.0" font-size="8.0" fill="#4646e6" text-anchor="start" font-weight="normal" textLength="10.18" lengthAdjust="spacingAndGlyphs" stroke="#4646e6" stroke-width="0.05">Dt.</text>
<text x="33.9" y="418.0" font-size="8.0" fill="#4646e6" text-anchor="start" font-weight="normal" textLength="47.99" lengthAdjust="spacingAndGlyphs" stroke="#4646e6" stroke-width="0.05">Recebimento:</text>
<text x="83.8" y="418.0" font-size="8.0" fill="#4646e6" text-anchor="start" font-weight="normal" textLength="24.25" lengthAdjust="spacingAndGlyphs" stroke="#4646e6" stroke-width="0.05">Campo</text>
<text x="109.97" y="418.0" font-size="8.0" fill="#4646e6" text-anchor="start" font-weight="normal" textLength="15.97" lengthAdjust="spacingAndGlyphs" stroke="#4646e6" stroke-width="0.05">NÃO</text>
<text x="127.85" y="418.0" font-size="8.0" fill="#4646e6" text-anchor="start" font-weight="normal" textLength="51.39" lengthAdjust="spacingAndGlyphs" stroke="#4646e6" stroke-width="0.05">OBRIGATÓRIO.</text>
<text x="181.16" y="418.0" font-size="8.0" fill="#4646e6" text-anchor="start" font-weight="normal" textLength="36.64" lengthAdjust="spacingAndGlyphs" stroke="#4646e6" stroke-width="0.05">Determina</text>
<text x="219.71" y="418.0" font-size="8.0" fill="#4646e6" text-anchor="start" font-weight="normal" textLength="4.06" lengthAdjust="spacingAndGlyphs" stroke="#4646e6" stroke-width="0.05">a</text>
<text x="225.69" y="418.0" font-size="8.0" fill="#4646e6" text-anchor="start" font-weight="normal" textLength="16.16" lengthAdjust="spacingAndGlyphs" stroke="#4646e6" stroke-width="0.05">Data</text>
<text x="243.76" y="418.0" font-size="8.0" fill="#4646e6" text-anchor="start" font-weight="normal" textLength="8.66" lengthAdjust="spacingAndGlyphs" stroke="#4646e6" stroke-width="0.05">de</text>
<text x="254.33" y="418.0" font-size="8.0" fill="#4646e6" text-anchor="start" font-weight="normal" textLength="45.73" lengthAdjust="spacingAndGlyphs" stroke="#4646e6" stroke-width="0.05">Recebimento</text>
<text x="301.97" y="418.0" font-size="8.0" fill="#4646e6" text-anchor="start" font-weight="normal" textLength="8.91" lengthAdjust="spacingAndGlyphs" stroke="#4646e6" stroke-width="0.05">do</text>
<text x="312.8" y="418.0" font-size="8.0" fill="#4646e6" text-anchor="start" font-weight="normal" textLength="18.09" lengthAdjust="spacingAndGlyphs" stroke="#4646e6" stroke-width="0.05">Item.</text>
<text x="332.8" y="418.0" font-size="8.0" fill="#4646e6" text-anchor="start" font-weight="normal" textLength="29.43" lengthAdjust="spacingAndGlyphs" stroke="#4646e6" stroke-width="0.05">Formato</text>
<text x="364.15" y="418.0" font-size="8.0" fill="#4646e6" text-anchor="start" font-weight="normal" textLength="4.06" lengthAdjust="spacingAndGlyphs" stroke="#4646e6" stroke-width="0.05">a</text>
<text x="370.12" y="418.0" font-size="8.0" fill="#4646e6" text-anchor="start" font-weight="normal" textLength="23.12" lengthAdjust="spacingAndGlyphs" stroke="#4646e6" stroke-width="0.05">seguir:</text>
<text x="395.15" y="418.0" font-size="8.0" fill="#4646e6" text-anchor="start" font-weight="normal" textLength="51.05" lengthAdjust="spacingAndGlyphs" stroke="#4646e6" stroke-width="0.05">DD/MM/AAAA</text>
<text x="21.8" y="429.0" font-size="8.0" fill="#4646e6" text-anchor="start" font-weight="normal" textLength="15.4" lengthAdjust="spacingAndGlyphs" stroke="#4646e6" stroke-width="0.05">Tipo</text>
<text x="39.17" y="429.0" font-size="8.0" fill="#4646e6" text-anchor="start" font-weight="normal" textLength="35.77" lengthAdjust="spacingAndGlyphs" stroke="#4646e6" stroke-width="0.05">Desconto:</text>
<text x="76.92" y="429.0" font-size="8.0" fill="#4646e6" text-anchor="start" font-weight="normal" textLength="24.93" lengthAdjust="spacingAndGlyphs" stroke="#4646e6" stroke-width="0.05">Campo</text>
<text x="103.81" y="429.0" font-size="8.0" fill="#4646e6" text-anchor="start" font-weight="normal" textLength="16.42" lengthAdjust="spacingAndGlyphs" stroke="#4646e6" stroke-width="0.05">NÃO</text>
<text x="122.2" y="429.0" font-size="8.0" fill="#4646e6" text-anchor="start" font-weight="normal" textLength="52.84" lengthAdjust="spacingAndGlyphs" stroke="#4646e6" stroke-width="0.05">OBRIGATÓRIO.</text>
<text x="177.01" y="429.0" font-size="8.0" fill="#4646e6" text-anchor="start" font-weight="normal" textLength="37.67" lengthAdjust="spacingAndGlyphs" stroke="#4646e6" stroke-width="0.05">Determina</text>
<text x="216.64" y="429.0" font-size="8.0" fill="#4646e6" text-anchor="start" font-weight="normal" textLength="15.32" lengthAdjust="spacingAndGlyphs" stroke="#4646e6" stroke-width="0.05">qual</text>
<text x="233.93" y="429.0" font-size="8.0" fill="#4646e6" text-anchor="start" font-weight="normal" textLength="14.94" lengthAdjust="spacingAndGlyphs" stroke="#4646e6" stroke-width="0.05">será</text>
<text x="250.84" y="429.0" font-size="8.0" fill="#4646e6" text-anchor="start" font-weight="normal" textLength="4.17" lengthAdjust="spacingAndGlyphs" stroke="#4646e6" stroke-width="0.05">a</text>
<text x="256.97" y="429.0" font-size="8.0" fill="#4646e6" text-anchor="start" font-weight="normal" textLength="20.36" lengthAdjust="spacingAndGlyphs" stroke="#4646e6" stroke-width="0.05">Regra</text>
<text x="279.3" y="429.0" font-size="8.0" fill="#4646e6" text-anchor="start" font-weight="normal" textLength="8.91" lengthAdjust="spacingAndGlyphs" stroke="#4646e6" stroke-width="0.05">de</text>
<text x="290.18" y="429.0" font-size="8.0" fill="#4646e6" text-anchor="start" font-weight="normal" textLength="25.65" lengthAdjust="spacingAndGlyphs" stroke="#4646e6" stroke-width="0.05">Cálculo</text>
<text x="317.8" y="429.0" font-size="8.0" fill="#4646e6" text-anchor="start" font-weight="normal" textLength="9.16" lengthAdjust="spacingAndGlyphs" stroke="#4646e6" stroke-width="0.05">do</text>
<text x="328.93" y="429.0" font-size="8.0" fill="#4646e6" text-anchor="start" font-weight="normal" textLength="35.62" lengthAdjust="spacingAndGlyphs" stroke="#4646e6" stroke-width="0.05">Desconto,</text>
<text x="366.52" y="429.0" font-size="8.0" fill="#4646e6" text-anchor="start" font-weight="normal" textLength="7.74" lengthAdjust="spacingAndGlyphs" stroke="#4646e6" stroke-width="0.05">se</text>
<text x="376.22" y="429.0" font-size="8.0" fill="#4646e6" text-anchor="start" font-weight="normal" textLength="14.94" lengthAdjust="spacingAndGlyphs" stroke="#4646e6" stroke-width="0.05">será</text>
<text x="393.13" y="429.0" font-size="8.0" fill="#4646e6" text-anchor="start" font-weight="normal" textLength="33.44" lengthAdjust="spacingAndGlyphs" stroke="#4646e6" stroke-width="0.05">calculado</text>
<text x="428.54" y="429.0" font-size="8.0" fill="#4646e6" text-anchor="start" font-weight="normal" textLength="15.49" lengthAdjust="spacingAndGlyphs" stroke="#4646e6" stroke-width="0.05">pelo</text>
<text x="446.0" y="429.0" font-size="8.0" fill="#4646e6" text-anchor="start" font-weight="normal" textLength="38.11" lengthAdjust="spacingAndGlyphs" stroke="#4646e6" stroke-width="0.05">Percentual</text>
<text x="486.07" y="429.0" font-size="8.0" fill="#4646e6" text-anchor="start" font-weight="normal" textLength="9.16" lengthAdjust="spacingAndGlyphs" stroke="#4646e6" stroke-width="0.05">ou</text>
<text x="497.21" y="429.0" font-size="8.0" fill="#4646e6" text-anchor="start" font-weight="normal" textLength="15.49" lengthAdjust="spacingAndGlyphs" stroke="#4646e6" stroke-width="0.05">pelo</text>
<text x="514.67" y="429.0" font-size="8.0" fill="#4646e6" text-anchor="start" font-weight="normal" textLength="20.93" lengthAdjust="spacingAndGlyphs" stroke="#4646e6" stroke-width="0.05">Valor.</text>
<text x="21.8" y="440.1" font-size="8.0" fill="#4646e6" text-anchor="start" font-weight="normal" textLength="19.91" lengthAdjust="spacingAndGlyphs" stroke="#4646e6" stroke-width="0.05">Valor</text>
<text x="43.8" y="440.1" font-size="8.0" fill="#4646e6" text-anchor="start" font-weight="normal" textLength="38.02" lengthAdjust="spacingAndGlyphs" stroke="#4646e6" stroke-width="0.05">Desconto:</text>
<text x="83.92" y="440.1" font-size="8.0" fill="#4646e6" text-anchor="start" font-weight="normal" textLength="26.5" lengthAdjust="spacingAndGlyphs" stroke="#4646e6" stroke-width="0.05">Campo</text>
<text x="112.51" y="440.1" font-size="8.0" fill="#4646e6" text-anchor="start" font-weight="normal" textLength="17.45" lengthAdjust="spacingAndGlyphs" stroke="#4646e6" stroke-width="0.05">NÃO</text>
<text x="132.06" y="440.1" font-size="8.0" fill="#4646e6" text-anchor="start" font-weight="normal" textLength="56.16" lengthAdjust="spacingAndGlyphs" stroke="#4646e6" stroke-width="0.05">OBRIGATÓRIO.</text>
<text x="190.31" y="440.1" font-size="8.0" fill="#4646e6" text-anchor="start" font-weight="normal" textLength="40.04" lengthAdjust="spacingAndGlyphs" stroke="#4646e6" stroke-width="0.05">Determina</text>
<text x="232.43" y="440.1" font-size="8.0" fill="#4646e6" text-anchor="start" font-weight="normal" textLength="4.88" lengthAdjust="spacingAndGlyphs" stroke="#4646e6" stroke-width="0.05">o</text>
<text x="239.41" y="440.1" font-size="8.0" fill="#4646e6" text-anchor="start" font-weight="normal" textLength="19.91" lengthAdjust="spacingAndGlyphs" stroke="#4646e6" stroke-width="0.05">Valor</text>
<text x="261.41" y="440.1" font-size="8.0" fill="#4646e6" text-anchor="start" font-weight="normal" textLength="9.74" lengthAdjust="spacingAndGlyphs" stroke="#4646e6" stroke-width="0.05">do</text>
<text x="273.24" y="440.1" font-size="8.0" fill="#4646e6" text-anchor="start" font-weight="normal" textLength="37.88" lengthAdjust="spacingAndGlyphs" stroke="#4646e6" stroke-width="0.05">Desconto.</text>
<text x="313.22" y="440.1" font-size="8.0" fill="#4646e6" text-anchor="start" font-weight="normal" textLength="32.16" lengthAdjust="spacingAndGlyphs" stroke="#4646e6" stroke-width="0.05">Formato</text>
<text x="347.47" y="440.1" font-size="8.0" fill="#4646e6" text-anchor="start" font-weight="normal" textLength="4.43" lengthAdjust="spacingAndGlyphs" stroke="#4646e6" stroke-width="0.05">a</text>
<text x="354.0" y="440.1" font-size="8.0" fill="#4646e6" text-anchor="start" font-weight="normal" textLength="25.27" lengthAdjust="spacingAndGlyphs" stroke="#4646e6" stroke-width="0.05">seguir:</text>
<text x="381.35" y="440.1" font-size="8.0" fill="#4646e6" text-anchor="start" font-weight="normal" textLength="30.45" lengthAdjust="spacingAndGlyphs" stroke="#4646e6" stroke-width="0.05">1234,56</text>
<line x1="18.6" y1="248.5" x2="224.2" y2="248.5" stroke="#5858e6" stroke-width="2.0" stroke-dasharray="1.9 1.27"/>
<line x1="18.6" y1="270.6" x2="224.2" y2="270.6" stroke="#5858e6" stroke-width="2.0" stroke-dasharray="1.9 1.27"/>
</g>
<line x1="0" y1="435.5" x2="886" y2="435.5" stroke="#c6c6c6" stroke-width="0.8" />
<rect x="872.8" y="132" width="13.2" height="303.5" fill="#e6e6e6" />
<line x1="872.8" y1="132" x2="872.8" y2="435.5" stroke="#c6c6c6" stroke-width="0.8" />
<rect x="875.6" y="142.2" width="8.8" height="212.8" fill="#fff" stroke="#bdbdbd" stroke-width="0.8" />
<rect x="874.8" y="133.9" width="9.7" height="8" fill="#fff" stroke="#9a9a9a" stroke-width="0.7" />
<path d="M877.5 139.5l2.2-2.5 2.2 2.5z" fill="#222" />
<rect x="875.2" y="426.9" width="9.2" height="8.7" fill="#fff" stroke="#9a9a9a" stroke-width="0.7" />
<path d="M877.5 430l2.2 2.5 2.2-2.5z" fill="#222" />
<rect x="0" y="436" width="886" height="17.9" fill="#e6e6e6" />
<path d="M19 441.5l-2.2 2.7 2.2 2.7" fill="none" stroke="#b8b8b8" stroke-width="0.8" />
<path d="M35 441.5l2.2 2.7-2.2 2.7" fill="none" stroke="#b8b8b8" stroke-width="0.8" />
<rect x="64.3" y="435.5" width="52.4" height="16.3" fill="#fff" />
<line x1="64.3" y1="435.5" x2="64.3" y2="451.8" stroke="#c6c6c6" stroke-width="0.7" />
<line x1="116.7" y1="435.5" x2="116.7" y2="451.8" stroke="#c6c6c6" stroke-width="0.7" />
<rect x="64.3" y="450.6" width="52.4" height="1.6" fill="#217346" />
<text x="72.2" y="446.9" font-size="9.2" fill="#217346" text-anchor="start" font-weight="bold" textLength="36.2" lengthAdjust="spacingAndGlyphs" stroke="#217346" stroke-width="0.25" >Planilha1</text>
<circle cx="143.3" cy="444.2" r="5" fill="none" stroke="#666" stroke-width="0.8"/>
<path d="M140.5 444.2h5.6M143.3 441.4v5.6" fill="none" stroke="#666" stroke-width="0.9" />
<rect x="531" y="440.5" width="1.1" height="1.1" fill="#aaa" />
<rect x="531" y="443.5" width="1.1" height="1.1" fill="#aaa" />
<rect x="531" y="446.5" width="1.1" height="1.1" fill="#aaa" />
<rect x="542.4" y="440.3" width="297.1" height="9.5" fill="#fff" stroke="#c6c6c6" stroke-width="0.7" />
<rect x="542.4" y="440.3" width="10" height="9.5" fill="#fff" stroke="#9a9a9a" stroke-width="0.7" />
<path d="M548.5 442.8l-2.5 2.2 2.5 2.2z" fill="#222" />
<rect x="863.2" y="440.7" width="9.7" height="8.7" fill="#fff" stroke="#9a9a9a" stroke-width="0.7" />
<path d="M867 442.8l2.5 2.2-2.5 2.2z" fill="#222" />
<rect x="0" y="453.9" width="886" height="14.1" fill="#f3f3f3" />
<line x1="0" y1="453.9" x2="886" y2="453.9" stroke="#d9d9d9" stroke-width="0.9" />
<text x="6.8" y="464.6" font-size="8.2" fill="#333" text-anchor="start" font-weight="normal" textLength="22.1" lengthAdjust="spacingAndGlyphs" stroke="#333" stroke-width="0.12" >Pronto</text>
<circle cx="43.9" cy="458.4" r="1.4" fill="#555"/>
<rect x="46.2" y="457.4" width="4.6" height="1.4" fill="#555" />
<rect x="42.5" y="460.2" width="8.4" height="4.6" fill="none" stroke="#888" stroke-width="0.7" />
<line x1="45.3" y1="460.2" x2="45.3" y2="464.8" stroke="#888" stroke-width="0.6" />
<line x1="48.1" y1="460.2" x2="48.1" y2="464.8" stroke="#888" stroke-width="0.6" />
<path d="M65.2 457.2a4 4 0 0 0 1.8 7.6" fill="none" stroke="#444" stroke-width="0.9" stroke-dasharray="1.5 0.7"/>
<line x1="66.3" y1="456.2" x2="66.3" y2="460" stroke="#444" stroke-width="0.9" />
<circle cx="66.3" cy="460" r="0.8" fill="#444"/>
<circle cx="69.9" cy="459.6" r="0.8" fill="#444"/>
<path d="M67.6 462.9l1.8 2.4 3.3-4.2" fill="none" stroke="#333" stroke-width="1.1" />
<text x="74.5" y="464.6" font-size="8.2" fill="#333" text-anchor="start" font-weight="normal" textLength="86.2" lengthAdjust="spacingAndGlyphs" stroke="#333" stroke-width="0.12" >Acessibilidade: tudo certo</text>
<rect x="599.5" y="457" width="9" height="6.5" fill="#444" />
<circle cx="606.5" cy="463" r="2.4" fill="#f3f3f3" stroke="#444" stroke-width="0.9"/>
<text x="610.6" y="464.6" font-size="8.2" fill="#333" text-anchor="start" font-weight="normal" textLength="68.9" lengthAdjust="spacingAndGlyphs" stroke="#333" stroke-width="0.12" >Exibir Configurações</text>
<rect x="692.3" y="453.9" width="25.3" height="14.1" fill="#d2d2d2" />
<rect x="701" y="457.3" width="7.6" height="7.6" fill="none" stroke="#888" stroke-width="0.7" />
<line x1="703.5" y1="457.3" x2="703.5" y2="464.9" stroke="#888" stroke-width="0.6" />
<line x1="706" y1="457.3" x2="706" y2="464.9" stroke="#888" stroke-width="0.6" />
<line x1="701" y1="459.8" x2="708.6" y2="459.8" stroke="#888" stroke-width="0.6" />
<line x1="701" y1="462.3" x2="708.6" y2="462.3" stroke="#888" stroke-width="0.6" />
<rect x="726.8" y="457.3" width="7.8" height="7.8" fill="none" stroke="#888" stroke-width="0.7" />
<rect x="728.5" y="458.5" width="4.4" height="5.4" fill="none" stroke="#aaa" stroke-width="0.6" />
<rect x="752.5" y="457.3" width="7.8" height="7.8" fill="none" stroke="#888" stroke-width="0.7" />
<line x1="754.5" y1="457.3" x2="754.5" y2="460.5" stroke="#888" stroke-width="0.7" />
<line x1="758.3" y1="457.3" x2="758.3" y2="460.5" stroke="#888" stroke-width="0.7" />
<line x1="754.5" y1="460.5" x2="758.3" y2="460.5" stroke="#888" stroke-width="0.7" />
<line x1="773.7" y1="461.2" x2="777.9" y2="461.2" stroke="#555" stroke-width="0.8" />
<line x1="782" y1="461.2" x2="846.7" y2="461.2" stroke="#777" stroke-width="0.8" />
<rect x="813.6" y="457.5" width="2.3" height="7.5" fill="#444" />
<path d="M850 461.2h5.2M852.6 458.6v5.2" fill="none" stroke="#555" stroke-width="0.8" />
<text x="864.3" y="464.6" font-size="8.2" fill="#333" text-anchor="start" font-weight="normal" textLength="17" lengthAdjust="spacingAndGlyphs" stroke="#333" stroke-width="0.12" >100%</text>
</svg>
</body></html>
